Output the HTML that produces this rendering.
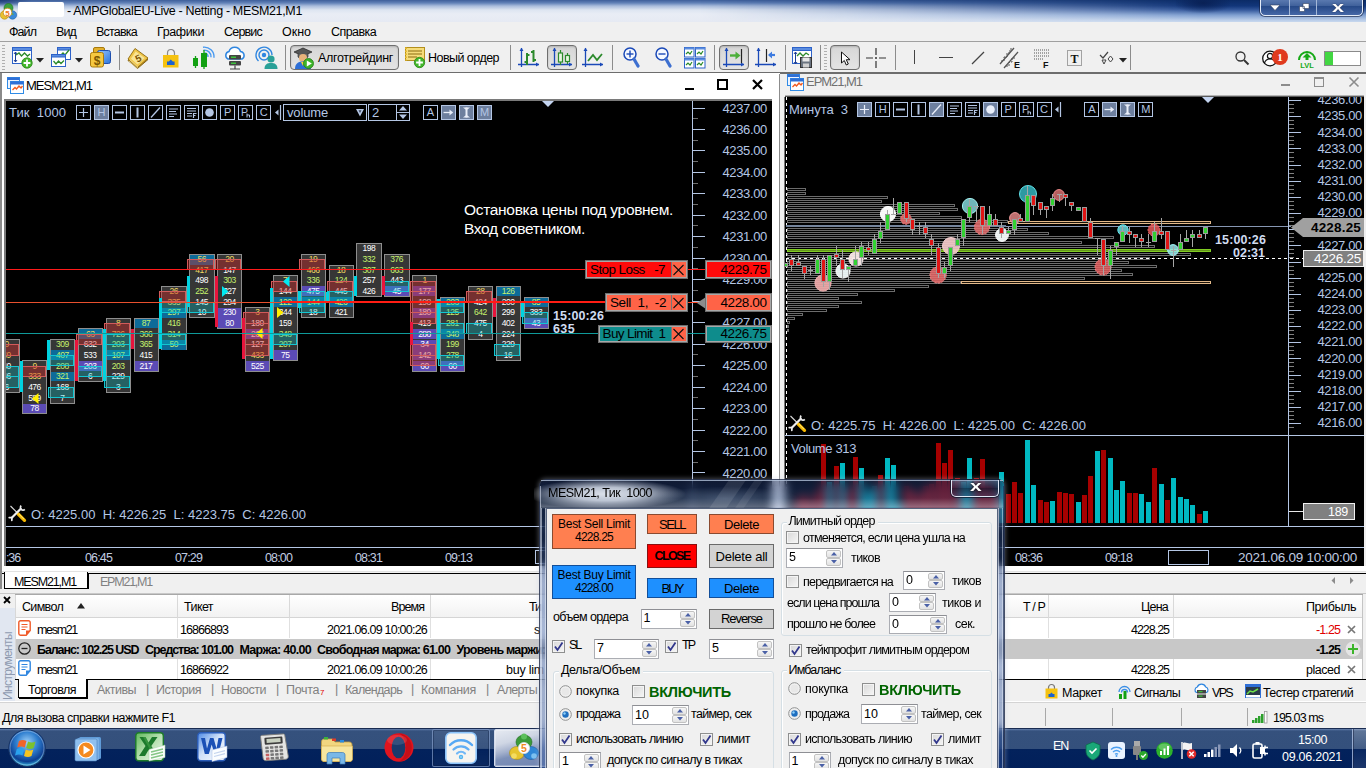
<!DOCTYPE html>
<html lang="ru"><head><meta charset="utf-8"><title>MT5</title><style>
*{box-sizing:border-box;margin:0;padding:0}
html,body{width:1366px;height:768px;overflow:hidden;background:#f0f0f0;font-family:"Liberation Sans",sans-serif;}
#root{position:absolute;left:0;top:0;width:1366px;height:768px;overflow:hidden;background:#f0f0f0}
#root div{position:absolute}
.t{white-space:pre;line-height:1}
svg{position:absolute;overflow:visible}
.dj{font-family:"DejaVu Sans Condensed","DejaVu Sans",sans-serif}

.n{font-size:8.5px;text-align:center;letter-spacing:-.5px;line-height:10.5px;padding-right:.5px}
.ps{font-size:13px;text-align:right;letter-spacing:-.35px;line-height:13px}
</style></head><body><div id="root">
<div style="left:0px;top:0px;width:1366px;height:22px;background:linear-gradient(#3d5e9a 0px,#6282b8 3px,#a9bcdc 6px,#dde5f1 10px,#e9edf5 14px,#e6eaf3 22px);"></div>
<div style="left:700px;top:0px;width:666px;height:22px;background:linear-gradient(#0b2b66 0px,#12367a 6px,#35599c 10px,#7f9fd0 15px,#b9cce8 20px,#c8d8ee 22px);-webkit-mask-image:linear-gradient(90deg,transparent 0,rgba(0,0,0,.35) 30%,rgba(0,0,0,.75) 60%,#000 75%);mask-image:linear-gradient(90deg,transparent 0,rgba(0,0,0,.35) 30%,rgba(0,0,0,.75) 60%,#000 75%)"></div>
<div style="left:1176px;top:0px;width:54px;height:15px;background:radial-gradient(ellipse 55% 70% at 50% 20%,rgba(8,30,80,.85),rgba(8,30,80,0));"></div>
<div style="left:0px;top:0px;width:40px;height:8px;background:radial-gradient(ellipse 80% 90% at 0% 0%,rgba(20,50,110,.8),rgba(20,50,110,0));"></div>
<svg style="left:0px;top:3px" width="18" height="18" viewBox="0 0 18 18"><circle cx="4.500" cy="12" r="4.200" fill="#e8c030" stroke="#b08a10" stroke-width=".6"/><circle cx="12.500" cy="12" r="4.200" fill="#3a8ad8" stroke="#1f5fa8" stroke-width=".6"/><circle cx="8.500" cy="5" r="4.500" fill="#3ca03c" stroke="#1f701f" stroke-width=".6"/><path d="M3 12c2-5 9-5 11 0" fill="#58a858" opacity=".8"/><circle cx="7.500" cy="9.500" r="4.300" fill="#fff" stroke="#d09020" stroke-width=".9"/><text x="7.500" y="12.500" font-size="8" font-weight="bold" text-anchor="middle" fill="#f07818" font-family="Liberation Sans">5</text></svg>
<div style="left:18px;top:2px;width:46px;height:15px;background:#fff;border-radius:2px"></div>
<div class="t" style="left:67px;top:5px;font-size:12.5px;color:#000;letter-spacing:-0.342px;">- AMPGlobalEU-Live - Netting - MESM21,M1</div>
<div style="left:1260px;top:-3px;width:103px;height:19px;border:1px solid #e4ecf8;border-radius:0 0 5px 5px;background:linear-gradient(#6281b6 0%,#41629c 45%,#274a88 50%,#4567a6 100%);box-shadow:0 0 0 1px rgba(20,30,60,.6)"></div>
<div style="left:1289px;top:-2px;width:1px;height:17px;background:#a4b8d8;"></div>
<div style="left:1316px;top:-2px;width:1px;height:17px;background:#a4b8d8;"></div>
<svg style="left:1260px;top:0" width="105" height="16"><path d="M10 5 L20 5 L15 10.5Z" fill="#fff" stroke="#33415f" stroke-width=".6"/><path d="M43 3.5h6v5h-6z M39.5 6.5h5v5h-5z" fill="#fff" stroke="#33415f" stroke-width=".6"/></svg>
<div class="t" style="left:1332px;top:-1px;font-size:15px;color:#fff;font-weight:bold;transform:scaleX(1.45);transform-origin:0 0;text-shadow:0 0 1px #223">x</div>
<div style="left:0px;top:22px;width:1366px;height:20px;background:#f0f0f0;"></div>
<div class="t" style="left:9px;top:26px;font-size:12.5px;color:#000;letter-spacing:-0.933px;">Файл</div>
<div class="t" style="left:56px;top:26px;font-size:12.5px;color:#000;letter-spacing:-0.871px;">Вид</div>
<div class="t" style="left:96px;top:26px;font-size:12.5px;color:#000;letter-spacing:-0.780px;">Вставка</div>
<div class="t" style="left:157px;top:26px;font-size:12.5px;color:#000;letter-spacing:-0.384px;">Графики</div>
<div class="t" style="left:224px;top:26px;font-size:12.5px;color:#000;letter-spacing:-0.800px;">Сервис</div>
<div class="t" style="left:282px;top:26px;font-size:12.5px;color:#000;letter-spacing:-0.011px;">Окно</div>
<div class="t" style="left:331px;top:26px;font-size:12.5px;color:#000;letter-spacing:-0.576px;">Справка</div>
<div style="left:0px;top:41px;width:1366px;height:1px;background:#a0a0a0;"></div>
<div style="left:0px;top:42px;width:1366px;height:30px;background:#f0f0f0;"></div>
<div style="left:0px;top:72px;width:1366px;height:2px;background:#6d6d6d;"></div>
<div style="left:2px;top:45px;width:3px;height:25px;background:repeating-linear-gradient(#a8a8a8 0 1px,transparent 1px 3px);opacity:.9"></div>
<svg style="left:12px;top:47px" width="22" height="22"><rect x=".5" y=".5" width="19" height="16" fill="#fff" stroke="#2d62c9"/><rect x=".5" y=".5" width="19" height="3" fill="#5b8de0" stroke="#2d62c9"/>
<path d="M4 8l3-2 2.5 3 3-3 3 3 2.5-2" fill="none" stroke="#2c8a2c" stroke-width="1.4"/><path d="M3.5 5v10M2 7l1.5-2 1.5 2M2 13l1.5 2 1.5-2" fill="none" stroke="#1d3f96" stroke-width="1"/>
<circle cx="15" cy="16" r="5.2" fill="#43b72b" stroke="#2a8516" stroke-width=".8"/><path d="M15 12.6v6.8M11.6 16h6.8" stroke="#fff" stroke-width="1.8"/></svg>
<svg style="left:36px;top:58px" width="8" height="5"><path d="M0 0h8L4 4.5z" fill="#222"/></svg>
<svg style="left:51px;top:47px" width="22" height="22"><rect x="6.5" y=".5" width="13" height="12" fill="#fff" stroke="#2d62c9"/><rect x="6.5" y=".5" width="13" height="2.5" fill="#5b8de0" stroke="#2d62c9"/><path d="M9 9l3-3 2 2 4-5" fill="none" stroke="#2c8a2c" stroke-width="1.3"/>
<rect x=".5" y="7.5" width="14" height="12" fill="#fff" stroke="#2d62c9"/><rect x=".5" y="7.5" width="14" height="2.5" fill="#5b8de0" stroke="#2d62c9"/><path d="M2.5 14l2.5 3 2.5-3 2.5 2.5 3-3" fill="none" stroke="#2c8a2c" stroke-width="1.3"/></svg>
<svg style="left:75px;top:58px" width="8" height="5"><path d="M0 0h8L4 4.5z" fill="#222"/></svg>
<svg style="left:90px;top:47px" width="22" height="22"><defs><linearGradient id="bl3" x1="0" y1="0" x2="1" y2="1"><stop offset="0" stop-color="#9cc8fa"/><stop offset="1" stop-color="#2a74dc"/></linearGradient></defs>
<rect x="3.500" y=".5" width="11" height="8" rx="1.500" fill="#e2b02e" stroke="#a87a0c"/>
<rect x="7.500" y="3.500" width="13" height="13" rx="2" fill="url(#bl3)" stroke="#1f4fae"/>
<rect x=".5" y="5.500" width="13" height="14.500" rx="2" fill="#f5c840" stroke="#a87a0c"/><text x="7" y="17.500" font-size="12" font-weight="bold" text-anchor="middle" fill="#7a5600" font-family="Liberation Sans">$</text></svg>
<div style="left:119px;top:45px;width:1px;height:25px;background:#8c8c8c;"></div>
<svg style="left:127px;top:47px" width="23" height="22"><path d="M1 13.500L8 3l13 9.500-10.500 9z" fill="#c89a28" stroke="#7a5a0c" stroke-width=".9"/><path d="M1 12L8 1.500l13 9.500-10.500 9.500z" fill="#f0c64a" stroke="#8f6a10" stroke-width=".9"/><path d="M4 11.800L8.700 4.500l9 6.600-7.300 6.500z" fill="#f9e496"/><path d="M2 14l8.500 8M3 12.800l8 7.800" stroke="#fff3c0" stroke-width=".6"/>
<text x="11" y="15" font-size="10" font-weight="bold" text-anchor="middle" fill="#7a5200" font-family="Liberation Sans" transform="rotate(-25 11 11)">5</text></svg>
<svg style="left:162px;top:47px" width="18" height="22"><path d="M5.500 8.500V6a3.500 3.500 0 0 1 7 0v2.500" fill="none" stroke="#8a8a8a" stroke-width="1.200"/><rect x="1" y="8" width="15.500" height="12.500" fill="#f5c211"/><path d="M5 18v-3.500h1.800l2-2 2 2h1.800V18z" fill="#1b62d1"/></svg>
<svg style="left:191px;top:46px" width="24" height="24"><path d="M12.500 4.200a6.500 6.500 0 0 1 7.500 7" fill="none" stroke="#4a9af0" stroke-width="1.400"/><path d="M12 1.200a9.800 9.800 0 0 1 11 10.500" fill="none" stroke="#4a9af0" stroke-width="1.400"/><path d="M13.500 7a3.500 3.500 0 0 1 3.500 4" fill="none" stroke="#4a9af0" stroke-width="1.400"/>
<path d="M4.500 10v12M13 4v19" stroke="#12a012" stroke-width="1.300"/><rect x="2" y="12" width="5" height="8" fill="#12a012"/><rect x="10" y="7" width="6" height="14" fill="#12a012"/></svg>
<svg style="left:223px;top:46px" width="24" height="24"><path d="M5 13a4 4 0 0 1 1-7.500 6 6 0 0 1 11.500 0A4 4 0 0 1 19 13z" fill="#fff" stroke="#2f86e0" stroke-width="1.5"/><rect x="6" y="9" width="12" height="4.500" rx="1" fill="#444"/><rect x="6" y="15" width="12" height="4.500" rx="1" fill="#444"/><rect x="8" y="10.500" width="5" height="1.500" fill="#3dc13d"/><rect x="8" y="16.500" width="5" height="1.500" fill="#3dc13d"/><path d="M12 19.500V23M7 23h10" stroke="#444" stroke-width="1.2"/></svg>
<svg style="left:255px;top:46px" width="24" height="24"><circle cx="9" cy="9" r="2.200" fill="#2f86e0"/><circle cx="9" cy="9" r="5" fill="none" stroke="#2f86e0" stroke-width="1.4"/><path d="M3.500 15A8 8 0 1 1 17 9" fill="none" stroke="#2f86e0" stroke-width="1.4"/>
<circle cx="16" cy="13" r="3.600" fill="#2aa198"/><path d="M9.500 23c0-5 3-6 6.500-6s6.500 1 6.500 6z" fill="#2aa198"/></svg>
<div style="left:285px;top:45px;width:1px;height:25px;background:#8c8c8c;"></div>
<div style="left:290px;top:45px;width:109px;height:25px;background:linear-gradient(#d6d6d6,#e4e4e4);border:1px solid #6f6f6f;border-radius:4px;box-shadow:inset 0 1px 2px rgba(0,0,0,.18)"></div>
<svg style="left:293px;top:47px" width="22" height="22"><path d="M10 1L1 5l9 4 9-4z" fill="#555" stroke="#222" stroke-width=".7"/><path d="M5 7v3c2 2 8 2 10 0V7" fill="#666" stroke="#222" stroke-width=".6"/><circle cx="10" cy="11" r="4" fill="#e8b27a"/><path d="M2 22c0-6 4-7.500 8-7.500s8 1.500 8 7.500z" fill="#2e6fd6"/><path d="M8 15l2 4 2-4" fill="#f2d23a"/>
<circle cx="15.500" cy="16.500" r="5" fill="#3db52a" stroke="#1f7d12" stroke-width=".8"/><path d="M13.800 13.600v5.800l5-2.900z" fill="#fff"/></svg>
<div class="t" style="left:318px;top:52px;font-size:12.5px;color:#000;letter-spacing:-0.328px;">Алготрейдинг</div>
<svg style="left:405px;top:46px" width="24" height="24"><rect x=".5" y="1.500" width="19" height="13" fill="#f6dc7a" stroke="#b38f1d"/><path d="M3 5h14M3 8h14M3 11h9" stroke="#8a6c10" stroke-width="1"/><path d="M1 1.500v13" stroke="#e6b92e" stroke-width="2" stroke-dasharray="1.500 1.500"/>
<circle cx="14.500" cy="16.500" r="5.200" fill="#43b72b" stroke="#2a8516" stroke-width=".8"/><path d="M14.500 13.100v6.800M11.100 16.500h6.800" stroke="#fff" stroke-width="1.800"/></svg>
<div class="t" style="left:428px;top:52px;font-size:12.5px;color:#000;letter-spacing:-0.534px;">Новый ордер</div>
<div style="left:510px;top:45px;width:1px;height:25px;background:#8c8c8c;"></div>
<svg style="left:518px;top:47px" width="22" height="22"><path d="M3.500 1v19M0 17.500h21" stroke="#1a49b8" stroke-width="1.300" fill="none"/><path d="M1.500 4l2-3.200 2 3.200zM18 15.500l3.200 2-3.200 2z" fill="#1a49b8"/><path d="M9 6v12M6.500 15H9M9 8h2.500M15.500 3v12M13 5h2.500M15.500 13H18" stroke="#2c8a2c" stroke-width="2" fill="none"/></svg>
<div style="left:547px;top:45px;width:30px;height:25px;background:linear-gradient(#d6d6d6,#e4e4e4);border:1px solid #6f6f6f;border-radius:4px;box-shadow:inset 0 1px 2px rgba(0,0,0,.18)"></div>
<svg style="left:551px;top:47px" width="22" height="22"><path d="M3.500 1v19M0 17.500h21" stroke="#1a49b8" stroke-width="1.300" fill="none"/><path d="M1.500 4l2-3.200 2 3.200zM18 15.500l3.200 2-3.200 2z" fill="#1a49b8"/><path d="M9.500 3v15M16.500 6v11" stroke="#2c8a2c" stroke-width="1.200"/><rect x="7.500" y="6" width="4" height="9" fill="#e9f7e2" stroke="#2c8a2c" stroke-width="1.200"/><rect x="14.500" y="8.500" width="4" height="6" fill="#e9f7e2" stroke="#2c8a2c" stroke-width="1.200"/></svg>
<svg style="left:582px;top:47px" width="22" height="22"><path d="M3.500 1v19M0 17.500h21" stroke="#1a49b8" stroke-width="1.300" fill="none"/><path d="M1.500 4l2-3.200 2 3.200zM18 15.500l3.200 2-3.200 2z" fill="#1a49b8"/><path d="M6 13l5-6 4 5 5-6" stroke="#2c8a2c" stroke-width="1.800" fill="none" transform="translate(0,1)"/></svg>
<div style="left:612px;top:45px;width:1px;height:25px;background:#8c8c8c;"></div>
<svg style="left:622px;top:46px" width="18" height="24"><circle cx="8" cy="8" r="6" fill="#f4f8ff" stroke="#1a49b8" stroke-width="1.500"/><path d="M4.500 8h7" stroke="#1a49b8" stroke-width="1.400"/><path d="M8 4.500v7" stroke="#1a49b8" stroke-width="1.400"/><path d="M12 13l4 7" stroke="#3d6fd0" stroke-width="3.200" stroke-linecap="round"/></svg>
<svg style="left:654px;top:46px" width="18" height="24"><circle cx="8" cy="8" r="6" fill="#f4f8ff" stroke="#1a49b8" stroke-width="1.500"/><path d="M4.500 8h7" stroke="#1a49b8" stroke-width="1.400"/><path d="M12 13l4 7" stroke="#3d6fd0" stroke-width="3.200" stroke-linecap="round"/></svg>
<svg style="left:684px;top:47px" width="22" height="22"><rect x="0.5" y="0.5" width="9.500" height="9.500" fill="#fff" stroke="#2d62c9"/><rect x="0.5" y="0.5" width="9.500" height="2" fill="#5b8de0"/><path d="M2 7l2-2 2 2 2-3" stroke="#2c8a2c" stroke-width="1.200" fill="none"/><rect x="0.5" y="11.5" width="9.500" height="9.500" fill="#fff" stroke="#2d62c9"/><rect x="0.5" y="11.5" width="9.500" height="2" fill="#5b8de0"/><path d="M2 18l2-2 2 2 2-3" stroke="#2c8a2c" stroke-width="1.200" fill="none"/><rect x="11.5" y="0.5" width="9.500" height="9.500" fill="#fff" stroke="#2d62c9"/><rect x="11.5" y="0.5" width="9.500" height="2" fill="#5b8de0"/><path d="M13 7l2-2 2 2 2-3" stroke="#2c8a2c" stroke-width="1.200" fill="none"/><rect x="11.5" y="11.5" width="9.500" height="9.500" fill="#fff" stroke="#2d62c9"/><rect x="11.5" y="11.5" width="9.500" height="2" fill="#5b8de0"/><path d="M13 18l2-2 2 2 2-3" stroke="#2c8a2c" stroke-width="1.200" fill="none"/></svg>
<div style="left:714px;top:45px;width:1px;height:25px;background:#8c8c8c;"></div>
<div style="left:719px;top:45px;width:30px;height:25px;background:linear-gradient(#d6d6d6,#e4e4e4);border:1px solid #6f6f6f;border-radius:4px;box-shadow:inset 0 1px 2px rgba(0,0,0,.18)"></div>
<svg style="left:723px;top:47px" width="22" height="22"><path d="M3.500 1v19M0 17.500h21" stroke="#1a49b8" stroke-width="1.300" fill="none"/><path d="M1.500 4l2-3.200 2 3.200zM18 15.500l3.200 2-3.200 2z" fill="#1a49b8"/><path d="M18.500 2v14" stroke="#222" stroke-width="1.200"/><path d="M7 8.500h7" stroke="#4caf3a" stroke-width="2.400"/><path d="M12.500 4.500l5 4-5 4z" fill="#4caf3a"/></svg>
<svg style="left:755px;top:47px" width="22" height="22"><path d="M3.500 1v19M0 17.500h21" stroke="#1a49b8" stroke-width="1.300" fill="none"/><path d="M1.500 4l2-3.200 2 3.200zM18 15.500l3.200 2-3.200 2z" fill="#1a49b8"/><path d="M11.500 2v13" stroke="#222" stroke-width="1.200"/><path d="M14 8h6" stroke="#3d7be0" stroke-width="2.200"/><path d="M17 4.500l-4 3.500 4 3.500z" fill="#3d7be0"/></svg>
<div style="left:785px;top:45px;width:1px;height:25px;background:#8c8c8c;"></div>
<svg style="left:792px;top:47px" width="22" height="22"><rect x=".5" y=".5" width="19" height="16" fill="#fff" stroke="#2d62c9"/><rect x=".5" y=".5" width="19" height="3" fill="#5b8de0" stroke="#2d62c9"/><path d="M5 9l3-3 3 3 3-3 3 2" fill="none" stroke="#2c8a2c" stroke-width="1.300"/><path d="M3.500 5v12M2 7l1.500-2 1.500 2M2 15l1.500 2 1.500-2" fill="none" stroke="#1d3f96" stroke-width="1"/>
<rect x="8.500" y="10.500" width="11" height="10" fill="#6b7480" stroke="#333"/><rect x="10.500" y="10.500" width="7" height="4" fill="#e8e8e8"/><rect x="11" y="16.500" width="6" height="4" fill="#d0d0d0"/></svg>
<div style="left:820px;top:45px;width:1px;height:25px;background:#8c8c8c;"></div>
<div style="left:824px;top:45px;width:3px;height:25px;background:repeating-linear-gradient(#a8a8a8 0 1px,transparent 1px 3px);opacity:.9"></div>
<div style="left:830px;top:45px;width:30px;height:25px;background:linear-gradient(#d6d6d6,#e4e4e4);border:1px solid #6f6f6f;border-radius:4px;box-shadow:inset 0 1px 2px rgba(0,0,0,.18)"></div>
<svg style="left:840px;top:51px" width="12" height="16"><path d="M1.500 1v11l2.800-2.500 2 4.500 2-1-2-4.300h3.700z" fill="#fff" stroke="#111" stroke-width="1"/></svg>
<svg style="left:866px;top:48px" width="20" height="20"><path d="M10 0v7M10 13v7M0 10h7M13 10h7" stroke="#333" stroke-width="1.200"/><path d="M9 10h2M10 9v2" stroke="#333" stroke-width="1"/></svg>
<div style="left:895px;top:45px;width:1px;height:25px;background:#8c8c8c;"></div>
<div style="left:914px;top:50px;width:1px;height:14px;background:#444;"></div>
<div style="left:939px;top:57px;width:14px;height:1px;background:#444;"></div>
<svg style="left:971px;top:51px" width="14" height="14"><path d="M1 13L13 1" stroke="#444" stroke-width="1.300"/></svg>
<svg style="left:999px;top:47px" width="24" height="22"><path d="M1 17L15 1M5 21L19 5" stroke="#555" stroke-width="1.300"/><path d="M2 14h3v-4h3V6h3V2h3M7 19h3v-4h3v-4h3" stroke="#555" stroke-width="1" fill="none" stroke-dasharray="2 1"/><text x="15" y="21" font-size="9" font-weight="bold" fill="#111" font-family="Liberation Sans">E</text></svg>
<svg style="left:1034px;top:49px" width="18" height="20"><path d="M0 1h15M0 4h15M0 7h15M0 10h9" stroke="#555" stroke-width="1" stroke-dasharray="1 1"/><text x="9" y="19" font-size="9" font-weight="bold" fill="#111" font-family="Liberation Sans">F</text></svg>
<svg style="left:1067px;top:50px" width="15" height="16"><rect x=".5" y=".5" width="14" height="15" fill="none" stroke="#555" stroke-dasharray="1 1"/><text x="7.500" y="12.500" font-size="12" text-anchor="middle" fill="#111" font-family="Liberation Serif" font-weight="bold">T</text></svg>
<svg style="left:1099px;top:50px" width="14" height="16"><path d="M1 5l3 3 5-6" stroke="#444" stroke-width="1.200" fill="none"/><path d="M9 9l2.500-3 2.500 3-2.500 3z" fill="none" stroke="#444" stroke-width="1"/><path d="M3 10l2 4 2-4z" fill="none" stroke="#444" stroke-width="1"/></svg>
<svg style="left:1119px;top:58px" width="8" height="5"><path d="M0 0h8L4 4.5z" fill="#222"/></svg>
<div style="left:1130px;top:45px;width:1px;height:25px;background:#8c8c8c;"></div>
<svg style="left:1235px;top:51px" width="15" height="15"><circle cx="5.500" cy="5.500" r="4.500" fill="none" stroke="#333" stroke-width="1.300"/><path d="M9 9l4.500 4.500" stroke="#333" stroke-width="2"/></svg>
<svg style="left:1262px;top:49px" width="28" height="18"><circle cx="8" cy="9.500" r="7.300" fill="#fff" stroke="#111" stroke-width="1.300"/><circle cx="8" cy="7" r="2.600" fill="none" stroke="#111" stroke-width="1.200"/><path d="M2.500 14c1-3.500 3-4 5.500-4s4.500.5 5.500 4" fill="none" stroke="#111" stroke-width="1.200"/><circle cx="18" cy="8" r="8" fill="#e03a1e"/><text x="18" y="12" font-size="11" font-weight="bold" text-anchor="middle" fill="#fff" font-family="Liberation Serif">1</text></svg>
<svg style="left:1297px;top:49px" width="20" height="20"><path d="M2 11a8 8 0 0 1 16 0" fill="none" stroke="#16a916" stroke-width="2"/><path d="M10 4l-4.500 4.500h3V11h3V8.500h3z" fill="#16a916"/><text x="10" y="19" font-size="7.500" font-weight="bold" text-anchor="middle" fill="#16a916" font-family="Liberation Sans">LVL</text></svg>
<div style="left:1324px;top:51px;width:37px;height:15px;background:#fff;border:1px solid #8a8a8a"></div>
<div style="left:1325px;top:52px;width:8px;height:13px;background:#42d642;"></div>
<div style="left:0px;top:74px;width:1366px;height:498px;background:#f0f0f0;"></div>
<div style="left:0px;top:73px;width:780px;height:499px;background:#ffffff;border-left:2px solid #8a8a8a;"></div>
<div style="left:779px;top:74px;width:1px;height:497px;background:#8c8c8c;"></div>
<svg style="left:7px;top:77px" width="17" height="17"><rect x=".5" y=".5" width="12" height="11" fill="#eef4ff" stroke="#2f8be6"/><rect x=".5" y=".5" width="12" height="2.500" fill="#2f6fd6"/><rect x="3.500" y="4.500" width="13" height="12" fill="#fff" stroke="#2f8be6"/><rect x="3.500" y="4.500" width="13" height="3" fill="#2f6fd6"/><path d="M5.500 13l2.500-2.500 1.500 1.500 2.500-3 2 2 1.500-2" stroke="#f0581e" stroke-width="1.300" fill="none"/></svg>
<div class="t" style="left:26px;top:79px;font-size:13px;color:#000;letter-spacing:-1.014px;">MESM21,M1</div>
<div style="left:685px;top:88px;width:9px;height:2px;background:#000;"></div>
<div style="left:717px;top:79px;width:11px;height:11px;border:2px solid #000;border-top-width:2px"></div>
<svg style="left:752px;top:79px" width="11" height="11"><path d="M1 1l9 9M10 1l-9 9" stroke="#000" stroke-width="2.200"/></svg>
<div style="left:4px;top:99px;width:768px;height:468px;background:#000;border-left:2px solid #7a7a7a;border-top:2px solid #7a7a7a"></div>
<div style="left:780px;top:74px;width:586px;height:498px;background:#f0f0f0;"></div>
<svg style="left:787px;top:70px" width="17" height="21"><rect x=".5" y="4.500" width="12" height="11" fill="#eef4ff" stroke="#2f8be6"/><rect x=".5" y="4.500" width="12" height="2.500" fill="#2f6fd6"/><rect x="3.500" y="8.500" width="13" height="12" fill="#fff" stroke="#2f8be6"/><rect x="3.500" y="8.500" width="13" height="3" fill="#2f6fd6"/><path d="M5.500 17l2.500-2.500 1.500 1.500 2.500-3 2 2 1.500-2" stroke="#f0581e" stroke-width="1.300" fill="none"/></svg>
<div class="t" style="left:806px;top:75px;font-size:13px;color:#707070;letter-spacing:-1.037px;">EPM21,M1</div>
<div style="left:1281px;top:84px;width:9px;height:2px;background:#8c8c8c;"></div>
<div style="left:1314px;top:77px;width:10px;height:10px;border:1px solid #8c8c8c;border-top-width:2px"></div>
<svg style="left:1349px;top:77px" width="10" height="10"><path d="M.5 .5l9 9M9.500 .5l-9 9" stroke="#8c8c8c" stroke-width="1.600"/></svg>
<div style="left:785px;top:95px;width:579px;height:1px;background:#b4b4b4;"></div>
<div style="left:785px;top:96px;width:579px;height:1px;background:#5a5a5a;"></div>
<div style="left:785px;top:97px;width:579px;height:470px;background:#000;"></div>
<div style="left:784px;top:97px;width:1px;height:470px;background:#7a7a7a;"></div>
<div style="left:786px;top:97px;width:1.400px;height:470px;background:repeating-linear-gradient(#fff 0 3px,#000 3px 6px)"></div>
<div style="left:0px;top:566px;width:1366px;height:6px;background:#ffffff;"></div>
<div style="left:0px;top:571px;width:1366px;height:1px;background:#e2e2e2;"></div>
<div style="left:0px;top:572px;width:1366px;height:17px;background:#f0f0f0;"></div>
<div style="left:0px;top:572.6px;width:1366px;height:1.2px;background:#000;"></div>
<div style="left:4px;top:572px;width:84px;height:17px;background:#fff;border:1px solid #000;border-top:none;box-shadow:1px 1px 0 #000"></div>
<div style="left:0px;top:566px;width:2px;height:24px;background:#8a8a8a;"></div>
<div class="t" style="left:14px;top:576px;font-size:12.5px;color:#000;letter-spacing:-1.138px;">MESM21,M1</div>
<div class="t" style="left:100px;top:576px;font-size:12.5px;color:#808080;letter-spacing:-1.228px;">EPM21,M1</div>
<svg style="left:1330px;top:576px" width="30" height="10"><path d="M5 1v7L1.500 4.500zM20 1v7l3.500-3.500z" fill="#8c8c8c"/></svg>
<div style="left:0px;top:589px;width:1366px;height:5px;background:#f0f0f0;"></div>
<div style="left:0px;top:593px;width:1366px;height:1px;background:#c8c8c8;"></div>
<div style="left:6px;top:101px;width:766px;height:466px;overflow:hidden">
<div style="left:-11.76px;top:238.1px;width:25.3px;height:53.85px;background:#363636;border:1px solid #8e8e8e"></div>
<div class="t n" style="left:-11.8px;top:238.3px;width:25.3px;color:#f0d860">0</div>
<div class="t n" style="left:-11.8px;top:248.9px;width:25.3px;color:#f0d860">69</div>
<div class="t n" style="left:-11.8px;top:259.6px;width:25.3px;color:#ffffff">60</div>
<div class="t n" style="left:-11.8px;top:270.2px;width:25.3px;color:#ffffff">46</div>
<div class="t n" style="left:-11.8px;top:280.9px;width:25.3px;color:#ffffff">6</div>
<div style="left:-13.76px;top:243.43px;width:26.3px;height:11.15px;background:rgba(205,40,40,.42);border:1px solid #d25a5a"></div>
<div style="left:-13.76px;top:264.72px;width:26.3px;height:11.15px;background:rgba(0,200,205,.30);border:1px solid #12c6d2"></div>
<div style="left:-13.76px;top:275.38px;width:26.3px;height:11.15px;background:rgba(0,200,205,.30);border:1px solid #12c6d2"></div>
<div style="left:16.1px;top:259.4px;width:25.3px;height:53.85px;background:#363636;border:1px solid #8e8e8e"></div>
<div style="left:17.1px;top:302.6px;width:23.3px;height:9.85px;background:#5b4bb5;"></div>
<div class="t n" style="left:16.1px;top:259.6px;width:25.3px;color:#f0d860">9</div>
<div class="t n" style="left:16.1px;top:270.2px;width:25.3px;color:#f0d860">333</div>
<div class="t n" style="left:16.1px;top:280.9px;width:25.3px;color:#ffffff">476</div>
<div class="t n" style="left:16.1px;top:291.6px;width:25.3px;color:#ffffff">589</div>
<div class="t n" style="left:16.1px;top:302.2px;width:25.3px;color:#ffffff">78</div>
<div style="left:14.1px;top:264.72px;width:26.3px;height:11.15px;background:rgba(205,40,40,.42);border:1px solid #d25a5a"></div>
<div style="left:13.5px;top:259.8px;width:3px;height:30.8px;background:#00d2e0;"></div>
<div style="left:43.96px;top:238.1px;width:25.3px;height:64.5px;background:#363636;border:1px solid #8e8e8e"></div>
<div style="left:44.96px;top:249.35px;width:23.3px;height:9.85px;background:#0d6b99;"></div>
<div style="left:44.96px;top:270.65px;width:23.3px;height:9.85px;background:#0d6b99;"></div>
<div class="t n" style="left:44.0px;top:238.3px;width:25.3px;color:#c6f26e">309</div>
<div class="t n" style="left:44.0px;top:248.9px;width:25.3px;color:#c6f26e">407</div>
<div class="t n" style="left:44.0px;top:259.6px;width:25.3px;color:#c6f26e">208</div>
<div class="t n" style="left:44.0px;top:270.2px;width:25.3px;color:#c6f26e">321</div>
<div class="t n" style="left:44.0px;top:280.9px;width:25.3px;color:#ffffff">168</div>
<div class="t n" style="left:44.0px;top:291.6px;width:25.3px;color:#ffffff">7</div>
<div style="left:41.96px;top:254.07px;width:26.3px;height:11.15px;background:rgba(0,200,205,.30);border:1px solid #12c6d2"></div>
<div style="left:41.96px;top:286.03px;width:26.3px;height:11.15px;background:rgba(0,200,205,.30);border:1px solid #12c6d2"></div>
<div style="left:41.36px;top:239px;width:3px;height:29.9px;background:#00d2e0;"></div>
<div style="left:71.82px;top:227.45px;width:25.3px;height:53.85px;background:#363636;border:1px solid #8e8e8e"></div>
<div style="left:72.82px;top:228.45px;width:23.3px;height:9.65px;background:#0d6b99;"></div>
<div style="left:72.82px;top:260.0px;width:23.3px;height:9.85px;background:#5b4bb5;"></div>
<div class="t n" style="left:71.8px;top:227.6px;width:25.3px;color:#f0d860">63</div>
<div class="t n" style="left:71.8px;top:238.3px;width:25.3px;color:#ffffff">632</div>
<div class="t n" style="left:71.8px;top:248.9px;width:25.3px;color:#ffffff">533</div>
<div class="t n" style="left:71.8px;top:259.6px;width:25.3px;color:#ffffff">203</div>
<div class="t n" style="left:71.8px;top:270.2px;width:25.3px;color:#ffffff">6</div>
<div style="left:69.82px;top:232.77px;width:26.3px;height:11.15px;background:rgba(205,40,40,.42);border:1px solid #d25a5a"></div>
<div style="left:69.82px;top:264.72px;width:26.3px;height:11.15px;background:rgba(0,200,205,.30);border:1px solid #12c6d2"></div>
<div style="left:69.22px;top:239px;width:3px;height:40.9px;background:#e8143c;"></div>
<div style="left:99.68px;top:216.8px;width:25.3px;height:75.15px;background:#363636;border:1px solid #8e8e8e"></div>
<div style="left:100.68px;top:249.35px;width:23.3px;height:9.85px;background:#0d6b99;"></div>
<div class="t n" style="left:99.7px;top:217.0px;width:25.3px;color:#f0d860">8</div>
<div class="t n" style="left:99.7px;top:227.6px;width:25.3px;color:#f0d860">726</div>
<div class="t n" style="left:99.7px;top:238.3px;width:25.3px;color:#c6f26e">203</div>
<div class="t n" style="left:99.7px;top:248.9px;width:25.3px;color:#c6f26e">107</div>
<div class="t n" style="left:99.7px;top:259.6px;width:25.3px;color:#c6f26e">203</div>
<div class="t n" style="left:99.7px;top:270.2px;width:25.3px;color:#ffffff">229</div>
<div class="t n" style="left:99.7px;top:280.9px;width:25.3px;color:#ffffff">3</div>
<div style="left:97.68px;top:222.12px;width:26.3px;height:11.15px;background:rgba(205,40,40,.42);border:1px solid #d25a5a"></div>
<div style="left:97.68px;top:232.77px;width:26.3px;height:11.15px;background:rgba(0,200,205,.30);border:1px solid #12c6d2"></div>
<div style="left:97.68px;top:243.43px;width:26.3px;height:11.15px;background:rgba(0,200,205,.30);border:1px solid #12c6d2"></div>
<div style="left:97.68px;top:275.38px;width:26.3px;height:11.15px;background:rgba(0,200,205,.30);border:1px solid #12c6d2"></div>
<div style="left:97.08px;top:228.3px;width:3px;height:51.6px;background:#00d2e0;"></div>
<div style="left:127.54px;top:216.8px;width:25.3px;height:53.85px;background:#363636;border:1px solid #8e8e8e"></div>
<div style="left:128.54px;top:217.8px;width:23.3px;height:9.65px;background:#0d6b99;"></div>
<div style="left:128.54px;top:260.0px;width:23.3px;height:9.85px;background:#5b4bb5;"></div>
<div class="t n" style="left:127.5px;top:217.0px;width:25.3px;color:#c6f26e">87</div>
<div class="t n" style="left:127.5px;top:227.6px;width:25.3px;color:#c6f26e">366</div>
<div class="t n" style="left:127.5px;top:238.3px;width:25.3px;color:#c6f26e">365</div>
<div class="t n" style="left:127.5px;top:248.9px;width:25.3px;color:#ffffff">415</div>
<div class="t n" style="left:127.5px;top:259.6px;width:25.3px;color:#ffffff">217</div>
<div style="left:124.94px;top:228.3px;width:3px;height:19.4px;background:#e8143c;"></div>
<div style="left:155.4px;top:184.85px;width:25.3px;height:64.5px;background:#363636;border:1px solid #8e8e8e"></div>
<div style="left:156.4px;top:206.75px;width:23.3px;height:9.85px;background:#0d6b99;"></div>
<div style="left:156.4px;top:238.7px;width:23.3px;height:9.85px;background:#0d6b99;"></div>
<div class="t n" style="left:155.4px;top:185.1px;width:25.3px;color:#f0d860">26</div>
<div class="t n" style="left:155.4px;top:195.7px;width:25.3px;color:#f0d860">335</div>
<div class="t n" style="left:155.4px;top:206.3px;width:25.3px;color:#c6f26e">297</div>
<div class="t n" style="left:155.4px;top:217.0px;width:25.3px;color:#c6f26e">416</div>
<div class="t n" style="left:155.4px;top:227.6px;width:25.3px;color:#c6f26e">314</div>
<div class="t n" style="left:155.4px;top:238.3px;width:25.3px;color:#c6f26e">50</div>
<div style="left:153.4px;top:190.18px;width:26.3px;height:11.15px;background:rgba(205,40,40,.42);border:1px solid #d25a5a"></div>
<div style="left:153.4px;top:200.82px;width:26.3px;height:11.15px;background:rgba(0,200,205,.30);border:1px solid #12c6d2"></div>
<div style="left:153.4px;top:232.77px;width:26.3px;height:11.15px;background:rgba(0,200,205,.30);border:1px solid #12c6d2"></div>
<div style="left:152.8px;top:196.7px;width:3px;height:51.3px;background:#00d2e0;"></div>
<div style="left:183.26px;top:152.9px;width:25.3px;height:64.5px;background:#363636;border:1px solid #8e8e8e"></div>
<div style="left:184.26px;top:153.9px;width:23.3px;height:9.65px;background:#0d6b99;"></div>
<div class="t n" style="left:183.3px;top:153.1px;width:25.3px;color:#f0d860">56</div>
<div class="t n" style="left:183.3px;top:163.8px;width:25.3px;color:#f0d860">417</div>
<div class="t n" style="left:183.3px;top:174.4px;width:25.3px;color:#ffffff">498</div>
<div class="t n" style="left:183.3px;top:185.1px;width:25.3px;color:#c6f26e">252</div>
<div class="t n" style="left:183.3px;top:195.7px;width:25.3px;color:#ffffff">145</div>
<div class="t n" style="left:183.3px;top:206.3px;width:25.3px;color:#ffffff">10</div>
<div style="left:181.26px;top:158.23px;width:26.3px;height:11.15px;background:rgba(205,40,40,.42);border:1px solid #d25a5a"></div>
<div style="left:181.26px;top:200.82px;width:26.3px;height:11.15px;background:rgba(0,200,205,.30);border:1px solid #12c6d2"></div>
<div style="left:180.66px;top:175px;width:3px;height:30.8px;background:#00d2e0;"></div>
<div style="left:211.12px;top:152.9px;width:25.3px;height:75.15px;background:#363636;border:1px solid #8e8e8e"></div>
<div style="left:212.12px;top:206.75px;width:23.3px;height:9.85px;background:#5b4bb5;"></div>
<div style="left:212.12px;top:217.4px;width:23.3px;height:9.85px;background:#5b4bb5;"></div>
<div class="t n" style="left:211.1px;top:153.1px;width:25.3px;color:#f0d860">20</div>
<div class="t n" style="left:211.1px;top:163.8px;width:25.3px;color:#ffffff">147</div>
<div class="t n" style="left:211.1px;top:174.4px;width:25.3px;color:#c6f26e">303</div>
<div class="t n" style="left:211.1px;top:185.1px;width:25.3px;color:#ffffff">327</div>
<div class="t n" style="left:211.1px;top:195.7px;width:25.3px;color:#ffffff">294</div>
<div class="t n" style="left:211.1px;top:206.3px;width:25.3px;color:#ffffff">230</div>
<div class="t n" style="left:211.1px;top:217.0px;width:25.3px;color:#ffffff">80</div>
<div style="left:209.12px;top:158.23px;width:26.3px;height:11.15px;background:rgba(205,40,40,.42);border:1px solid #d25a5a"></div>
<div style="left:208.52px;top:175px;width:3px;height:50.8px;background:#e8143c;"></div>
<div style="left:238.98px;top:206.15px;width:25.3px;height:64.5px;background:#363636;border:1px solid #8e8e8e"></div>
<div style="left:239.98px;top:228.05px;width:23.3px;height:9.85px;background:#5b4bb5;"></div>
<div style="left:239.98px;top:260.0px;width:23.3px;height:9.85px;background:#5b4bb5;"></div>
<div class="t n" style="left:239.0px;top:206.3px;width:25.3px;color:#f0d860">3</div>
<div class="t n" style="left:239.0px;top:217.0px;width:25.3px;color:#ffffff">180</div>
<div class="t n" style="left:239.0px;top:227.6px;width:25.3px;color:#ffffff">264</div>
<div class="t n" style="left:239.0px;top:238.3px;width:25.3px;color:#ffffff">127</div>
<div class="t n" style="left:239.0px;top:248.9px;width:25.3px;color:#f0d860">433</div>
<div class="t n" style="left:239.0px;top:259.6px;width:25.3px;color:#ffffff">525</div>
<div style="left:236.98px;top:211.47px;width:26.3px;height:11.15px;background:rgba(205,40,40,.42);border:1px solid #d25a5a"></div>
<div style="left:236.98px;top:222.12px;width:26.3px;height:11.15px;background:rgba(205,40,40,.42);border:1px solid #d25a5a"></div>
<div style="left:236.98px;top:232.77px;width:26.3px;height:11.15px;background:rgba(205,40,40,.42);border:1px solid #d25a5a"></div>
<div style="left:236.98px;top:243.43px;width:26.3px;height:11.15px;background:rgba(205,40,40,.42);border:1px solid #d25a5a"></div>
<div style="left:236.38px;top:217px;width:3px;height:41px;background:#e8143c;"></div>
<div style="left:266.84px;top:174.2px;width:25.3px;height:85.8px;background:#363636;border:1px solid #8e8e8e"></div>
<div style="left:267.84px;top:196.1px;width:23.3px;height:9.85px;background:#0d6b99;"></div>
<div style="left:267.84px;top:249.35px;width:23.3px;height:9.85px;background:#5b4bb5;"></div>
<div class="t n" style="left:266.8px;top:174.4px;width:25.3px;color:#f0d860">7</div>
<div class="t n" style="left:266.8px;top:185.1px;width:25.3px;color:#ffffff">144</div>
<div class="t n" style="left:266.8px;top:195.7px;width:25.3px;color:#c6f26e">122</div>
<div class="t n" style="left:266.8px;top:206.3px;width:25.3px;color:#ffffff">344</div>
<div class="t n" style="left:266.8px;top:217.0px;width:25.3px;color:#ffffff">159</div>
<div class="t n" style="left:266.8px;top:227.6px;width:25.3px;color:#c6f26e">348</div>
<div class="t n" style="left:266.8px;top:238.3px;width:25.3px;color:#c6f26e">207</div>
<div class="t n" style="left:266.8px;top:248.9px;width:25.3px;color:#ffffff">75</div>
<div style="left:264.84px;top:179.52px;width:26.3px;height:11.15px;background:rgba(205,40,40,.42);border:1px solid #d25a5a"></div>
<div style="left:264.84px;top:232.77px;width:26.3px;height:11.15px;background:rgba(0,200,205,.30);border:1px solid #12c6d2"></div>
<div style="left:264.24px;top:186.5px;width:3px;height:71.9px;background:#00d2e0;"></div>
<div style="left:294.7px;top:152.9px;width:25.3px;height:64.5px;background:#363636;border:1px solid #8e8e8e"></div>
<div style="left:295.7px;top:185.45px;width:23.3px;height:9.85px;background:#5b4bb5;"></div>
<div style="left:295.7px;top:196.1px;width:23.3px;height:9.85px;background:#0d6b99;"></div>
<div class="t n" style="left:294.7px;top:153.1px;width:25.3px;color:#f0d860">19</div>
<div class="t n" style="left:294.7px;top:163.8px;width:25.3px;color:#f0d860">466</div>
<div class="t n" style="left:294.7px;top:174.4px;width:25.3px;color:#c6f26e">336</div>
<div class="t n" style="left:294.7px;top:185.1px;width:25.3px;color:#ffffff">475</div>
<div class="t n" style="left:294.7px;top:195.7px;width:25.3px;color:#c6f26e">144</div>
<div class="t n" style="left:294.7px;top:206.3px;width:25.3px;color:#ffffff">18</div>
<div style="left:292.7px;top:158.23px;width:26.3px;height:11.15px;background:rgba(205,40,40,.42);border:1px solid #d25a5a"></div>
<div style="left:292.7px;top:190.18px;width:26.3px;height:11.15px;background:rgba(0,200,205,.30);border:1px solid #12c6d2"></div>
<div style="left:292.7px;top:200.82px;width:26.3px;height:11.15px;background:rgba(0,200,205,.30);border:1px solid #12c6d2"></div>
<div style="left:292.1px;top:190px;width:3px;height:17px;background:#00d2e0;"></div>
<div style="left:322.56px;top:163.55px;width:25.3px;height:53.85px;background:#363636;border:1px solid #8e8e8e"></div>
<div style="left:323.56px;top:196.1px;width:23.3px;height:9.85px;background:#0d6b99;"></div>
<div class="t n" style="left:322.6px;top:163.8px;width:25.3px;color:#f0d860">18</div>
<div class="t n" style="left:322.6px;top:174.4px;width:25.3px;color:#c6f26e">124</div>
<div class="t n" style="left:322.6px;top:185.1px;width:25.3px;color:#ffffff">445</div>
<div class="t n" style="left:322.6px;top:195.7px;width:25.3px;color:#c6f26e">426</div>
<div class="t n" style="left:322.6px;top:206.3px;width:25.3px;color:#ffffff">421</div>
<div style="left:320.56px;top:179.52px;width:26.3px;height:11.15px;background:rgba(205,40,40,.42);border:1px solid #d25a5a"></div>
<div style="left:320.56px;top:190.18px;width:26.3px;height:11.15px;background:rgba(0,200,205,.30);border:1px solid #12c6d2"></div>
<div style="left:319.96px;top:190.7px;width:3px;height:9.9px;background:#00d2e0;"></div>
<div style="left:350.42px;top:142.25px;width:25.3px;height:53.85px;background:#363636;border:1px solid #8e8e8e"></div>
<div class="t n" style="left:350.4px;top:142.4px;width:25.3px;color:#ffffff">198</div>
<div class="t n" style="left:350.4px;top:153.1px;width:25.3px;color:#c6f26e">332</div>
<div class="t n" style="left:350.4px;top:163.8px;width:25.3px;color:#c6f26e">307</div>
<div class="t n" style="left:350.4px;top:174.4px;width:25.3px;color:#ffffff">257</div>
<div class="t n" style="left:350.4px;top:185.1px;width:25.3px;color:#ffffff">426</div>
<div style="left:347.82px;top:175.4px;width:3px;height:19.5px;background:#00d2e0;"></div>
<div style="left:378.28px;top:152.9px;width:25.3px;height:43.2px;background:#363636;border:1px solid #8e8e8e"></div>
<div style="left:379.28px;top:185.45px;width:23.3px;height:9.85px;background:#5b4bb5;"></div>
<div class="t n" style="left:378.3px;top:153.1px;width:25.3px;color:#c6f26e">376</div>
<div class="t n" style="left:378.3px;top:163.8px;width:25.3px;color:#c6f26e">663</div>
<div class="t n" style="left:378.3px;top:174.4px;width:25.3px;color:#ffffff">443</div>
<div class="t n" style="left:378.3px;top:185.1px;width:25.3px;color:#ffffff">45</div>
<div style="left:376.28px;top:179.52px;width:26.3px;height:11.15px;background:rgba(0,200,205,.30);border:1px solid #12c6d2"></div>
<div style="left:375.68px;top:175.4px;width:3px;height:18.6px;background:#e8143c;"></div>
<div style="left:406.14px;top:174.2px;width:25.3px;height:96.45px;background:#363636;border:1px solid #8e8e8e"></div>
<div style="left:407.14px;top:185.45px;width:23.3px;height:9.85px;background:#5b4bb5;"></div>
<div style="left:407.14px;top:206.75px;width:23.3px;height:9.85px;background:#5b4bb5;"></div>
<div style="left:407.14px;top:228.05px;width:23.3px;height:9.85px;background:#5b4bb5;"></div>
<div style="left:407.14px;top:238.7px;width:23.3px;height:9.85px;background:#5b4bb5;"></div>
<div style="left:407.14px;top:249.35px;width:23.3px;height:9.85px;background:#5b4bb5;"></div>
<div style="left:407.14px;top:260.0px;width:23.3px;height:9.85px;background:#5b4bb5;"></div>
<div class="t n" style="left:406.1px;top:174.4px;width:25.3px;color:#f0d860">1</div>
<div class="t n" style="left:406.1px;top:185.1px;width:25.3px;color:#ffffff">177</div>
<div class="t n" style="left:406.1px;top:195.7px;width:25.3px;color:#ffffff">198</div>
<div class="t n" style="left:406.1px;top:206.3px;width:25.3px;color:#ffffff">180</div>
<div class="t n" style="left:406.1px;top:217.0px;width:25.3px;color:#ffffff">413</div>
<div class="t n" style="left:406.1px;top:227.6px;width:25.3px;color:#ffffff">288</div>
<div class="t n" style="left:406.1px;top:238.3px;width:25.3px;color:#ffffff">34</div>
<div class="t n" style="left:406.1px;top:248.9px;width:25.3px;color:#ffffff">142</div>
<div class="t n" style="left:406.1px;top:259.6px;width:25.3px;color:#ffffff">60</div>
<div style="left:404.14px;top:179.52px;width:26.3px;height:11.15px;background:rgba(205,40,40,.42);border:1px solid #d25a5a"></div>
<div style="left:404.14px;top:190.18px;width:26.3px;height:11.15px;background:rgba(205,40,40,.42);border:1px solid #d25a5a"></div>
<div style="left:404.14px;top:200.82px;width:26.3px;height:11.15px;background:rgba(205,40,40,.42);border:1px solid #d25a5a"></div>
<div style="left:404.14px;top:211.47px;width:26.3px;height:11.15px;background:rgba(205,40,40,.42);border:1px solid #d25a5a"></div>
<div style="left:404.14px;top:243.43px;width:26.3px;height:11.15px;background:rgba(205,40,40,.42);border:1px solid #d25a5a"></div>
<div style="left:404.14px;top:254.07px;width:26.3px;height:11.15px;background:rgba(205,40,40,.42);border:1px solid #d25a5a"></div>
<div style="left:403.54px;top:221.4px;width:3px;height:22.2px;background:#e8143c;"></div>
<div style="left:434.0px;top:195.5px;width:25.3px;height:75.15px;background:#363636;border:1px solid #8e8e8e"></div>
<div style="left:435.0px;top:196.5px;width:23.3px;height:9.65px;background:#0d6b99;"></div>
<div style="left:435.0px;top:228.05px;width:23.3px;height:9.85px;background:#0d6b99;"></div>
<div style="left:435.0px;top:260.0px;width:23.3px;height:9.85px;background:#5b4bb5;"></div>
<div class="t n" style="left:434.0px;top:195.7px;width:25.3px;color:#c6f26e">203</div>
<div class="t n" style="left:434.0px;top:206.3px;width:25.3px;color:#c6f26e">125</div>
<div class="t n" style="left:434.0px;top:217.0px;width:25.3px;color:#c6f26e">281</div>
<div class="t n" style="left:434.0px;top:227.6px;width:25.3px;color:#c6f26e">348</div>
<div class="t n" style="left:434.0px;top:238.3px;width:25.3px;color:#c6f26e">199</div>
<div class="t n" style="left:434.0px;top:248.9px;width:25.3px;color:#c6f26e">278</div>
<div class="t n" style="left:434.0px;top:259.6px;width:25.3px;color:#ffffff">60</div>
<div style="left:432.0px;top:200.82px;width:26.3px;height:11.15px;background:rgba(0,200,205,.30);border:1px solid #12c6d2"></div>
<div style="left:432.0px;top:222.12px;width:26.3px;height:11.15px;background:rgba(0,200,205,.30);border:1px solid #12c6d2"></div>
<div style="left:432.0px;top:254.07px;width:26.3px;height:11.15px;background:rgba(0,200,205,.30);border:1px solid #12c6d2"></div>
<div style="left:431.4px;top:198px;width:3px;height:60.4px;background:#00d2e0;"></div>
<div style="left:461.86px;top:184.85px;width:25.3px;height:53.85px;background:#363636;border:1px solid #8e8e8e"></div>
<div class="t n" style="left:461.9px;top:185.1px;width:25.3px;color:#f0d860">28</div>
<div class="t n" style="left:461.9px;top:195.7px;width:25.3px;color:#ffffff">424</div>
<div class="t n" style="left:461.9px;top:206.3px;width:25.3px;color:#c6f26e">642</div>
<div class="t n" style="left:461.9px;top:217.0px;width:25.3px;color:#ffffff">475</div>
<div class="t n" style="left:461.9px;top:227.6px;width:25.3px;color:#ffffff">4</div>
<div style="left:459.86px;top:190.18px;width:26.3px;height:11.15px;background:rgba(205,40,40,.42);border:1px solid #d25a5a"></div>
<div style="left:459.86px;top:222.12px;width:26.3px;height:11.15px;background:rgba(0,200,205,.30);border:1px solid #12c6d2"></div>
<div style="left:489.72px;top:184.85px;width:25.3px;height:75.15px;background:#363636;border:1px solid #8e8e8e"></div>
<div style="left:490.72px;top:185.85px;width:23.3px;height:9.65px;background:#0d6b99;"></div>
<div class="t n" style="left:489.7px;top:185.1px;width:25.3px;color:#c6f26e">126</div>
<div class="t n" style="left:489.7px;top:195.7px;width:25.3px;color:#ffffff">200</div>
<div class="t n" style="left:489.7px;top:206.3px;width:25.3px;color:#ffffff">299</div>
<div class="t n" style="left:489.7px;top:217.0px;width:25.3px;color:#ffffff">402</div>
<div class="t n" style="left:489.7px;top:227.6px;width:25.3px;color:#ffffff">224</div>
<div class="t n" style="left:489.7px;top:238.3px;width:25.3px;color:#ffffff">229</div>
<div class="t n" style="left:489.7px;top:248.9px;width:25.3px;color:#ffffff">16</div>
<div style="left:487.72px;top:243.43px;width:26.3px;height:11.15px;background:rgba(0,200,205,.30);border:1px solid #12c6d2"></div>
<div style="left:487.12px;top:197.2px;width:3px;height:19.0px;background:#e8143c;"></div>
<div style="left:517.58px;top:195.5px;width:25.3px;height:32.55px;background:#363636;border:1px solid #8e8e8e"></div>
<div style="left:518.58px;top:196.5px;width:23.3px;height:9.65px;background:#0d6b99;"></div>
<div style="left:518.58px;top:217.4px;width:23.3px;height:9.85px;background:#5b4bb5;"></div>
<div class="t n" style="left:517.6px;top:195.7px;width:25.3px;color:#c6f26e">85</div>
<div class="t n" style="left:517.6px;top:206.3px;width:25.3px;color:#ffffff">383</div>
<div class="t n" style="left:517.6px;top:217.0px;width:25.3px;color:#ffffff">43</div>
<div style="left:515.58px;top:211.47px;width:26.3px;height:11.15px;background:rgba(0,200,205,.30);border:1px solid #12c6d2"></div>
<div style="left:514.98px;top:202px;width:3px;height:14px;background:#00d2e0;"></div>
<svg style="left:216px;top:184.8px" width="7" height="11"><path d="M0 0L6.500 5.500L0 11z" fill="#00e8f0"/></svg>
<svg style="left:271px;top:206.0px" width="7" height="11"><path d="M0 0L6.500 5.500L0 11z" fill="#ffee00"/></svg>
<svg style="left:277px;top:174.5px" width="7" height="11"><path d="M6.500 0L0 5.500L6.500 11z" fill="#00e8f0"/></svg>
<svg style="left:250px;top:227.0px" width="7" height="11"><path d="M6.500 0L0 5.500L6.500 11z" fill="#ffee00"/></svg>
<svg style="left:26px;top:292.0px" width="7" height="11"><path d="M6.500 0L0 5.500L6.500 11z" fill="#ffee00"/></svg>
<div style="left:0px;top:167.8px;width:700px;height:1.4px;background:#ff1a1a;"></div>
<div style="left:0px;top:200.8px;width:700px;height:1.3px;background:#e8502e;"></div>
<div style="left:276px;top:199.7px;width:330px;height:2.8px;background:linear-gradient(#ff5030,#ff0808 35%,#ff0808 65%,#ff5030);"></div>
<div style="left:0px;top:232px;width:700px;height:1.2px;background:#0f9a9a;"></div>
<div class="t" style="left:547px;top:209px;font-size:12.5px;color:#d0dcf0;letter-spacing:0.121px;font-weight:bold;">15:00:26</div>
<div class="t" style="left:547px;top:222px;font-size:12.5px;color:#d0dcf0;letter-spacing:0.382px;font-weight:bold;">635</div>
<div class="t" style="left:458px;top:101px;font-size:15.5px;color:#fff;letter-spacing:-0.309px;">Остановка цены под уровнем.</div>
<div class="t" style="left:458px;top:120px;font-size:15.5px;color:#fff;letter-spacing:-0.371px;">Вход советником.</div>
<div style="left:686px;top:0px;width:1.2px;height:426px;background:#b4c6e4;"></div>
<div style="left:686px;top:6.5px;width:12.5px;height:1px;background:#b4c6e4;"></div>
<div style="left:687px;top:17.1px;width:5px;height:1px;background:#6e6e6e;"></div>
<div class="t ps" style="left:700px;top:0.5px;width:61px;color:#b4c6e4">4237.00</div>
<div style="left:686px;top:27.97px;width:12.5px;height:1px;background:#b4c6e4;"></div>
<div style="left:687px;top:38.57px;width:5px;height:1px;background:#6e6e6e;"></div>
<div class="t ps" style="left:700px;top:22.0px;width:61px;color:#b4c6e4">4236.00</div>
<div style="left:686px;top:49.44px;width:12.5px;height:1px;background:#b4c6e4;"></div>
<div style="left:687px;top:60.04px;width:5px;height:1px;background:#6e6e6e;"></div>
<div class="t ps" style="left:700px;top:43.4px;width:61px;color:#b4c6e4">4235.00</div>
<div style="left:686px;top:70.91px;width:12.5px;height:1px;background:#b4c6e4;"></div>
<div style="left:687px;top:81.51px;width:5px;height:1px;background:#6e6e6e;"></div>
<div class="t ps" style="left:700px;top:64.9px;width:61px;color:#b4c6e4">4234.00</div>
<div style="left:686px;top:92.38px;width:12.5px;height:1px;background:#b4c6e4;"></div>
<div style="left:687px;top:102.98px;width:5px;height:1px;background:#6e6e6e;"></div>
<div class="t ps" style="left:700px;top:86.4px;width:61px;color:#b4c6e4">4233.00</div>
<div style="left:686px;top:113.85px;width:12.5px;height:1px;background:#b4c6e4;"></div>
<div style="left:687px;top:124.45px;width:5px;height:1px;background:#6e6e6e;"></div>
<div class="t ps" style="left:700px;top:107.8px;width:61px;color:#b4c6e4">4232.00</div>
<div style="left:686px;top:135.32px;width:12.5px;height:1px;background:#b4c6e4;"></div>
<div style="left:687px;top:145.92px;width:5px;height:1px;background:#6e6e6e;"></div>
<div class="t ps" style="left:700px;top:129.3px;width:61px;color:#b4c6e4">4231.00</div>
<div style="left:686px;top:156.79px;width:12.5px;height:1px;background:#b4c6e4;"></div>
<div style="left:687px;top:167.39px;width:5px;height:1px;background:#6e6e6e;"></div>
<div class="t ps" style="left:700px;top:150.8px;width:61px;color:#b4c6e4">4230.00</div>
<div style="left:686px;top:178.26px;width:12.5px;height:1px;background:#b4c6e4;"></div>
<div style="left:687px;top:188.86px;width:5px;height:1px;background:#6e6e6e;"></div>
<div class="t ps" style="left:700px;top:172.3px;width:61px;color:#b4c6e4">4229.00</div>
<div style="left:686px;top:199.73px;width:12.5px;height:1px;background:#b4c6e4;"></div>
<div style="left:687px;top:210.33px;width:5px;height:1px;background:#6e6e6e;"></div>
<div class="t ps" style="left:700px;top:193.7px;width:61px;color:#b4c6e4">4228.00</div>
<div style="left:686px;top:221.2px;width:12.5px;height:1px;background:#b4c6e4;"></div>
<div style="left:687px;top:231.8px;width:5px;height:1px;background:#6e6e6e;"></div>
<div class="t ps" style="left:700px;top:215.2px;width:61px;color:#b4c6e4">4227.00</div>
<div style="left:686px;top:242.67px;width:12.5px;height:1px;background:#b4c6e4;"></div>
<div style="left:687px;top:253.27px;width:5px;height:1px;background:#6e6e6e;"></div>
<div class="t ps" style="left:700px;top:236.7px;width:61px;color:#b4c6e4">4226.00</div>
<div style="left:686px;top:264.14px;width:12.5px;height:1px;background:#b4c6e4;"></div>
<div style="left:687px;top:274.74px;width:5px;height:1px;background:#6e6e6e;"></div>
<div class="t ps" style="left:700px;top:258.1px;width:61px;color:#b4c6e4">4225.00</div>
<div style="left:686px;top:285.61px;width:12.5px;height:1px;background:#b4c6e4;"></div>
<div style="left:687px;top:296.21px;width:5px;height:1px;background:#6e6e6e;"></div>
<div class="t ps" style="left:700px;top:279.6px;width:61px;color:#b4c6e4">4224.00</div>
<div style="left:686px;top:307.08px;width:12.5px;height:1px;background:#b4c6e4;"></div>
<div style="left:687px;top:317.68px;width:5px;height:1px;background:#6e6e6e;"></div>
<div class="t ps" style="left:700px;top:301.1px;width:61px;color:#b4c6e4">4223.00</div>
<div style="left:686px;top:328.55px;width:12.5px;height:1px;background:#b4c6e4;"></div>
<div style="left:687px;top:339.15px;width:5px;height:1px;background:#6e6e6e;"></div>
<div class="t ps" style="left:700px;top:322.5px;width:61px;color:#b4c6e4">4222.00</div>
<div style="left:686px;top:350.02px;width:12.5px;height:1px;background:#b4c6e4;"></div>
<div style="left:687px;top:360.62px;width:5px;height:1px;background:#6e6e6e;"></div>
<div class="t ps" style="left:700px;top:344.0px;width:61px;color:#b4c6e4">4221.00</div>
<div style="left:686px;top:371.49px;width:12.5px;height:1px;background:#b4c6e4;"></div>
<div class="t ps" style="left:700px;top:365.5px;width:61px;color:#b4c6e4">4220.00</div>
<div style="left:687px;top:-3.7px;width:5px;height:1px;background:#6e6e6e;"></div>
<div style="left:579px;top:159.25px;width:103px;height:18.5px;background:#a8a8a8;border:1px solid #6e6e6e"></div>
<div style="left:581px;top:161.25px;width:99px;height:14.5px;background:#ff0a0a;"></div>
<div style="left:665px;top:161.25px;width:15px;height:14.5px;background:#ff6347;border-left:1px solid #777"></div>
<svg style="left:667px;top:163.5px" width="11" height="10"><path d="M.5 0l10 10M10.500 0l-10 10" stroke="#111" stroke-width="1.100"/></svg>
<div class="t" style="left:584px;top:162.0px;font-size:13.5px;color:#000;letter-spacing:-0.592px;white-space:pre;">Stop Loss   -7</div>
<div style="left:599px;top:192.35px;width:83px;height:18.5px;background:#a8a8a8;border:1px solid #6e6e6e"></div>
<div style="left:601px;top:194.35px;width:79px;height:14.5px;background:#ff6347;"></div>
<div style="left:665px;top:194.35px;width:15px;height:14.5px;background:#ff6347;border-left:1px solid #777"></div>
<svg style="left:667px;top:196.60000000000002px" width="11" height="10"><path d="M.5 0l10 10M10.500 0l-10 10" stroke="#111" stroke-width="1.100"/></svg>
<div class="t" style="left:604px;top:195.10000000000002px;font-size:13.5px;color:#000;letter-spacing:-0.398px;white-space:pre;">Sell  1,  -2</div>
<div style="left:591.5px;top:224.05px;width:90.5px;height:17.5px;background:#a8a8a8;border:1px solid #6e6e6e"></div>
<div style="left:593.5px;top:226.05px;width:86.5px;height:13.5px;background:#0e8c8c;"></div>
<div style="left:665px;top:226.05px;width:15px;height:13.5px;background:#ff6347;border-left:1px solid #777"></div>
<svg style="left:667px;top:227.8px" width="11" height="10"><path d="M.5 0l10 10M10.500 0l-10 10" stroke="#111" stroke-width="1.100"/></svg>
<div class="t" style="left:596.5px;top:226.3px;font-size:13.5px;color:#000;letter-spacing:-0.627px;white-space:pre;">Buy Limit  1</div>
<div style="left:682px;top:167.9px;width:17px;height:1.3px;background:#ff1a1a;"></div>
<div style="left:682px;top:200.9px;width:17px;height:1.3px;background:#ff4a2a;"></div>
<div style="left:682px;top:232.1px;width:17px;height:1.2px;background:#0f9a9a;"></div>
<svg style="left:690.5px;top:195.60000000000002px" width="9" height="12"><path d="M0 6L9 0v12z" fill="#8c8c8c"/></svg>
<div style="left:699px;top:159.25px;width:66.5px;height:18.5px;background:#a8a8a8;border:1px solid #6e6e6e"></div>
<div style="left:701px;top:161.25px;width:62.5px;height:14.5px;background:#ff0a0a;"></div>
<div class="t" style="left:714.5px;top:162.0px;font-size:13.5px;color:#000;letter-spacing:-0.399px;">4229.75</div>
<div style="left:699px;top:192.35px;width:66.5px;height:18.5px;background:#a8a8a8;border:1px solid #6e6e6e"></div>
<div style="left:701px;top:194.35px;width:62.5px;height:14.5px;background:#ff6347;"></div>
<div class="t" style="left:714.5px;top:195.10000000000002px;font-size:13.5px;color:#000;letter-spacing:-0.399px;">4228.00</div>
<div style="left:699px;top:224.05px;width:66.5px;height:17.5px;background:#a8a8a8;border:1px solid #6e6e6e"></div>
<div style="left:701px;top:226.05px;width:62.5px;height:13.5px;background:#0e8c8c;"></div>
<div class="t" style="left:714.5px;top:226.3px;font-size:13.5px;color:#000;letter-spacing:-0.399px;">4226.75</div>
<div class="t" style="left:3px;top:5px;font-size:13px;color:#b4c6e4;letter-spacing:0.060px;white-space:pre;">Тик  1000</div>
<div style="left:70.0px;top:3.5px;width:15px;height:15px;background:#000;border:1px solid #b4c6e4"></div>
<svg style="left:70.0px;top:3.5px" width="15" height="15"><path d="M7.500 3v9M3 7.500h9" stroke="#b4c6e4" stroke-width="1.200"/></svg>
<div style="left:88.03px;top:3.5px;width:15px;height:15px;background:#6d7f9e;border:1px solid #b4c6e4"></div>
<div class="t" style="left:88.03px;top:5.8px;width:15px;text-align:center;font-size:11px;color:#b4c6e4">H</div>
<div style="left:106.06px;top:3.5px;width:15px;height:15px;background:#000;border:1px solid #b4c6e4"></div>
<svg style="left:106.06px;top:3.5px" width="15" height="15"><path d="M3 7.500h9" stroke="#b4c6e4" stroke-width="2"/></svg>
<div style="left:124.09px;top:3.5px;width:15px;height:15px;background:#000;border:1px solid #b4c6e4"></div>
<svg style="left:124.09px;top:3.5px" width="15" height="15"><path d="M7.500 2.500v10" stroke="#b4c6e4" stroke-width="2"/></svg>
<div style="left:142.12px;top:3.5px;width:15px;height:15px;background:#000;border:1px solid #b4c6e4"></div>
<svg style="left:142.12px;top:3.5px" width="15" height="15"><path d="M3 12.500L12 2.500" stroke="#b4c6e4" stroke-width="1.300"/></svg>
<div style="left:160.15px;top:3.5px;width:15px;height:15px;background:#000;border:1px solid #b4c6e4"></div>
<svg style="left:160.15px;top:3.5px" width="15" height="15"><path d="M3 4h9M3 6.500h7M3 9h8M3 11.500h5" stroke="#b4c6e4" stroke-width="1"/></svg>
<div style="left:178.18px;top:3.5px;width:15px;height:15px;background:#000;border:1px solid #b4c6e4"></div>
<svg style="left:178.18px;top:3.5px" width="15" height="15"><path d="M3 3.500h9M3 6h9M3 8.500h5M3 11h5" stroke="#b4c6e4" stroke-width="1"/><path d="M9 8.500h3.500M9 10.500h2.500M9.500 8v5" stroke="#b4c6e4" stroke-width="1.200"/></svg>
<div style="left:196.21px;top:3.5px;width:15px;height:15px;background:#000;border:1px solid #b4c6e4"></div>
<svg style="left:196.21px;top:3.5px" width="15" height="15"><circle cx="7.500" cy="7.500" r="4.300" fill="#b4c6e4"/></svg>
<div style="left:214.24px;top:3.5px;width:15px;height:15px;background:#000;border:1px solid #b4c6e4"></div>
<div class="t" style="left:214.24px;top:5.8px;width:15px;text-align:center;font-size:11px;color:#b4c6e4">P</div>
<div style="left:232.27px;top:3.5px;width:15px;height:15px;background:#000;border:1px solid #b4c6e4"></div>
<svg style="left:232.27px;top:3.5px" width="15" height="15"><text x="3" y="11" font-size="10.500" fill="#b4c6e4" font-family="Liberation Sans">P</text><path d="M9 8.500v4M9 10h2.500v2.500" stroke="#b4c6e4" stroke-width="1" fill="none"/></svg>
<div style="left:250.3px;top:3.5px;width:15px;height:15px;background:#000;border:1px solid #b4c6e4"></div>
<div class="t" style="left:250.3px;top:5.8px;width:15px;text-align:center;font-size:11px;color:#b4c6e4">C</div>
<svg style="left:268.33000000000004px;top:3.5px" width="8" height="15"><path d="M6.500 0v15" stroke="#b4c6e4" stroke-width="1.200"/><path d="M4.500 4.500v6L1 7.500z" fill="#b4c6e4"/></svg>
<div style="left:277px;top:3px;width:84px;height:17px;background:#000;border:1px solid #b4c6e4"></div>
<div class="t" style="left:281px;top:5px;font-size:13px;color:#b4c6e4;letter-spacing:-0.151px;">volume</div>
<svg style="left:349.5px;top:8px" width="8" height="8"><path d="M0 0h8L4 7.500z" fill="#b4c6e4"/><path d="M2.500 1.200h3L4 4z" fill="#3a4660"/></svg>
<div style="left:362px;top:3px;width:42px;height:17px;background:#000;border:1px solid #b4c6e4"></div>
<div class="t" style="left:366px;top:5px;font-size:13px;color:#b4c6e4;letter-spacing:-0.229px;">2</div>
<svg style="left:390px;top:4px" width="13" height="15"><path d="M.5 0v15" stroke="#b4c6e4"/><path d="M1 7.500h12" stroke="#b4c6e4"/><path d="M3 5.500h8L7 1zM3 9.500h8L7 14z" fill="#b4c6e4"/></svg>
<div style="left:417px;top:3.5px;width:15px;height:15px;background:#000;border:1px solid #b4c6e4"></div>
<div class="t" style="left:417px;top:5.8px;width:15px;text-align:center;font-size:11px;color:#b4c6e4">A</div>
<div style="left:435px;top:3.5px;width:15px;height:15px;background:#6d7f9e;border:1px solid #b4c6e4"></div>
<svg style="left:435px;top:3.5px" width="15" height="15"><path d="M2.500 7.500h9" stroke="#e9eef9" stroke-width="1.300"/><path d="M8.500 4.500l3.500 3-3.500 3z" fill="#e9eef9"/></svg>
<div style="left:453px;top:3.5px;width:15px;height:15px;background:#6d7f9e;border:1px solid #b4c6e4"></div>
<svg style="left:453px;top:3.5px" width="15" height="15"><path d="M7.500 2.500v10" stroke="#e9eef9" stroke-width="2"/><path d="M4 2.500h7l-2.500 2h-2zM4 12.500h7l-2.500-2h-2z" fill="#e9eef9"/></svg>
<div style="left:471px;top:3.5px;width:15px;height:15px;background:#6d7f9e;border:1px solid #b4c6e4"></div>
<div class="t" style="left:471px;top:5.8px;width:15px;text-align:center;font-size:11px;color:#b4c6e4">M</div>
<svg style="left:536px;top:0px" width="12" height="6"><path d="M0 0h12L6 6z" fill="#c4d4f0"/></svg>
<div style="left:0px;top:425px;width:767px;height:1.2px;background:#b4c6e4;"></div>
<div style="left:0px;top:446.2px;width:767px;height:1.2px;background:#b4c6e4;"></div>
<svg style="left:2.5px;top:404px" width="18" height="18"><path d="M1.500 1L8.500 8" stroke="#dcdcdc" stroke-width="1.100"/><path d="M9.200 9L15.500 15.300" stroke="#f5b800" stroke-width="3.300" stroke-linecap="round"/><path d="M10 9.200l5 5" stroke="#ffe88a" stroke-width="1"/><path d="M2.800 12.700L12.300 3.200" stroke="#ececec" stroke-width="2.200"/><path d="M12.200 .7a2.500 2.500 0 1 0 3.600 3.600" fill="none" stroke="#ececec" stroke-width="1.700"/><path d="M3 12.500l-2.800 .2M3 12.500l-.2 2.900" stroke="#ececec" stroke-width="1.700" stroke-linecap="round"/></svg>
<div class="t" style="left:25px;top:407px;font-size:13px;color:#b4c6e4;letter-spacing:0.008px;white-space:pre;">O: 4225.00  H: 4226.25  L: 4223.75  C: 4226.00</div>
<div class="t" style="left:0px;top:451px;font-size:12.5px;color:#c0cce0;letter-spacing:-1.125px;">:36</div>
<div class="t" style="left:79px;top:451px;font-size:12.5px;color:#c0cce0;letter-spacing:-0.855px;">06:45</div>
<div class="t" style="left:169px;top:451px;font-size:12.5px;color:#c0cce0;letter-spacing:-0.855px;">07:29</div>
<div class="t" style="left:259px;top:451px;font-size:12.5px;color:#c0cce0;letter-spacing:-0.855px;">08:00</div>
<div class="t" style="left:349px;top:451px;font-size:12.5px;color:#c0cce0;letter-spacing:-0.855px;">08:31</div>
<div class="t" style="left:439px;top:451px;font-size:12.5px;color:#c0cce0;letter-spacing:-0.855px;">09:13</div>
<div style="left:529px;top:449px;width:12px;height:14px;border:1px solid #b4c6e4"></div>
</div>
<div style="left:785px;top:97px;width:579px;height:470px;overflow:hidden">
<div style="left:2px;top:91px;width:18.5px;height:3px;background:#000;border:1px solid #6c6c6c"></div>
<div style="left:2px;top:95px;width:18.5px;height:3px;background:#000;border:1px solid #6c6c6c"></div>
<div style="left:2px;top:99px;width:100.6px;height:3px;background:#000;border:1px solid #6c6c6c"></div>
<div style="left:2px;top:103px;width:94.5px;height:3px;background:#000;border:1px solid #6c6c6c"></div>
<div style="left:2px;top:107px;width:168px;height:3px;background:#000;border:1px solid #6c6c6c"></div>
<div style="left:2px;top:111px;width:170.6px;height:3px;background:#000;border:1px solid #6c6c6c"></div>
<div style="left:2px;top:115px;width:152.6px;height:3px;background:#000;border:1px solid #6c6c6c"></div>
<div style="left:2px;top:119px;width:175px;height:3px;background:#000;border:1px solid #6c6c6c"></div>
<div style="left:2px;top:123px;width:221px;height:3px;background:#000;border:1px solid #6c6c6c"></div>
<div style="left:2px;top:131px;width:241px;height:3px;background:#000;border:1px solid #6c6c6c"></div>
<div style="left:2px;top:135px;width:261.5px;height:3px;background:#000;border:1px solid #6c6c6c"></div>
<div style="left:2px;top:139px;width:326.8px;height:3px;background:#000;border:1px solid #6c6c6c"></div>
<div style="left:2px;top:144px;width:294.8px;height:3px;background:#000;border:1px solid #6c6c6c"></div>
<div style="left:2px;top:148px;width:367.8px;height:3px;background:#000;border:1px solid #6c6c6c"></div>
<div style="left:2px;top:156px;width:403.7px;height:3px;background:#000;border:1px solid #6c6c6c"></div>
<div style="left:2px;top:160px;width:363px;height:3px;background:#000;border:1px solid #6c6c6c"></div>
<div style="left:2px;top:164px;width:341.7px;height:3px;background:#000;border:1px solid #6c6c6c"></div>
<div style="left:2px;top:168px;width:369.8px;height:3px;background:#000;border:1px solid #6c6c6c"></div>
<div style="left:2px;top:172px;width:334.6px;height:3px;background:#000;border:1px solid #6c6c6c"></div>
<div style="left:2px;top:176px;width:345.8px;height:3px;background:#000;border:1px solid #6c6c6c"></div>
<div style="left:2px;top:180px;width:297.9px;height:3px;background:#000;border:1px solid #6c6c6c"></div>
<div style="left:2px;top:184px;width:174px;height:3px;background:#000;border:1px solid #6c6c6c"></div>
<div style="left:2px;top:188px;width:141.6px;height:3px;background:#000;border:1px solid #6c6c6c"></div>
<div style="left:2px;top:192px;width:108px;height:3px;background:#000;border:1px solid #6c6c6c"></div>
<div style="left:2px;top:196px;width:71px;height:3px;background:#000;border:1px solid #6c6c6c"></div>
<div style="left:2px;top:200px;width:51.7px;height:3px;background:#000;border:1px solid #6c6c6c"></div>
<div style="left:2px;top:204px;width:74.7px;height:3px;background:#000;border:1px solid #6c6c6c"></div>
<div style="left:2px;top:208px;width:51.5px;height:3px;background:#000;border:1px solid #6c6c6c"></div>
<div style="left:2px;top:212px;width:40.3px;height:3px;background:#000;border:1px solid #6c6c6c"></div>
<div style="left:2px;top:216px;width:15.7px;height:3px;background:#000;border:1px solid #6c6c6c"></div>
<div style="left:2px;top:220px;width:8.3px;height:3px;background:#000;border:1px solid #6c6c6c"></div>
<div style="left:2px;top:224px;width:2.5px;height:3px;background:#000;border:1px solid #6c6c6c"></div>
<div style="left:2px;top:228px;width:1.5px;height:3px;background:#000;border:1px solid #6c6c6c"></div>
<div style="left:2px;top:232px;width:1.5px;height:3px;background:#000;border:1px solid #6c6c6c"></div>
<div style="left:1px;top:128.4px;width:220px;height:2px;background:#74849c;"></div>
<div style="left:221px;top:128.8px;width:285px;height:1.1px;background:#8696b2;"></div>
<div style="left:223px;top:123.8px;width:203px;height:3.6px;background:#1a1208;border:1px solid #e2b98a"></div>
<div style="left:176px;top:183.8px;width:250px;height:3.6px;background:#1a1208;border:1px solid #e2b98a"></div>
<div style="left:2px;top:152px;width:424px;height:3.2px;background:#64951c;border:1px solid #80cc22"></div>
<div style="left:1px;top:160.7px;width:518px;height:1.3px;background:repeating-linear-gradient(90deg,#fff 0 3px,transparent 3px 6px)"></div>
<svg style="left:38.3px;top:185.5px" width="1" height="1"><circle r="8.1" fill="rgba(240,170,170,.92)" stroke="#f0b0b0" stroke-width="1"/></svg>
<svg style="left:58.1px;top:173.6px" width="1" height="1"><circle r="7.1" fill="rgba(240,250,250,.95)" stroke="#ffffff" stroke-width="1"/></svg>
<svg style="left:70.5px;top:161.8px" width="1" height="1"><circle r="7.1" fill="rgba(250,232,232,.95)" stroke="#ffeaea" stroke-width="1"/></svg>
<svg style="left:102.5px;top:117.3px" width="1" height="1"><circle r="7.6" fill="rgba(255,255,255,.97)" stroke="#ffffff" stroke-width="1"/></svg>
<svg style="left:121.2px;top:121.7px" width="1" height="1"><circle r="5.4" fill="rgba(225,100,100,.85)" stroke="#f08080" stroke-width="1" stroke-dasharray="2 1.500"/><g stroke="#f08080" stroke-width=".8" opacity=".75"><path d="M-3.6 -4h7.3"/><path d="M-5.0 -2h10.0"/><path d="M-5.4 0h10.8"/><path d="M-5.0 2h10.0"/><path d="M-3.6 4h7.3"/></g></svg>
<svg style="left:153.3px;top:177.9px" width="1" height="1"><circle r="8.1" fill="rgba(225,95,95,.8)" stroke="#ff8a8a" stroke-width="1" stroke-dasharray="2 1.500"/><g stroke="#ff8a8a" stroke-width=".8" opacity=".75"><path d="M-4.1 -7h8.2"/><path d="M-6.4 -5h12.7"/><path d="M-7.5 -3h15.0"/><path d="M-8.0 -1h16.1"/><path d="M-8.0 1h16.1"/><path d="M-7.5 3h15.0"/><path d="M-6.4 5h12.7"/><path d="M-4.1 7h8.2"/></g></svg>
<svg style="left:166.3px;top:149.1px" width="1" height="1"><circle r="8.5" fill="rgba(242,200,200,.93)" stroke="#f4d0d0" stroke-width="1"/></svg>
<svg style="left:185.3px;top:109.3px" width="1" height="1"><circle r="7.6" fill="rgba(130,215,218,.85)" stroke="#a0f0f0" stroke-width="1"/></svg>
<svg style="left:197.3px;top:129.6px" width="1" height="1"><circle r="7.6" fill="rgba(225,100,100,.8)" stroke="#f08080" stroke-width="1" stroke-dasharray="2 1.500"/><g stroke="#f08080" stroke-width=".8" opacity=".75"><path d="M-4.7 -6h9.3"/><path d="M-6.5 -4h12.9"/><path d="M-7.3 -2h14.7"/><path d="M-7.6 0h15.2"/><path d="M-7.3 2h14.7"/><path d="M-6.5 4h12.9"/><path d="M-4.7 6h9.3"/></g></svg>
<svg style="left:217.4px;top:137.6px" width="1" height="1"><circle r="6.4" fill="rgba(245,252,252,.95)" stroke="#ffffff" stroke-width="1"/></svg>
<svg style="left:229.5px;top:121.2px" width="1" height="1"><circle r="5.4" fill="rgba(225,130,130,.85)" stroke="#f09a9a" stroke-width="1"/></svg>
<svg style="left:242.5px;top:97.0px" width="1" height="1"><circle r="8.5" fill="rgba(50,170,178,.9)" stroke="#60e0e8" stroke-width="1"/></svg>
<svg style="left:274.3px;top:97.5px" width="1" height="1"><circle r="5.4" fill="rgba(215,110,110,.85)" stroke="#f08a8a" stroke-width="1"/></svg>
<svg style="left:318.0px;top:169.6px" width="1" height="1"><circle r="8" fill="rgba(225,80,80,.75)" stroke="#ff8a8a" stroke-width="1" stroke-dasharray="2 1.500"/><g stroke="#ff8a8a" stroke-width=".8" opacity=".75"><path d="M-3.9 -7h7.7"/><path d="M-6.2 -5h12.5"/><path d="M-7.4 -3h14.8"/><path d="M-7.9 -1h15.9"/><path d="M-7.9 1h15.9"/><path d="M-7.4 3h14.8"/><path d="M-6.2 5h12.5"/><path d="M-3.9 7h7.7"/></g></svg>
<svg style="left:337.5px;top:133.3px" width="1" height="1"><circle r="5.2" fill="rgba(110,215,220,.85)" stroke="#60e8f0" stroke-width="1"/></svg>
<svg style="left:369.2px;top:133.3px" width="1" height="1"><circle r="6" fill="rgba(215,80,80,.8)" stroke="#ff7070" stroke-width="1" stroke-dasharray="2 1.500"/><g stroke="#ff7070" stroke-width=".8" opacity=".75"><path d="M-3.3 -5h6.6"/><path d="M-5.2 -3h10.4"/><path d="M-5.9 -1h11.8"/><path d="M-5.9 1h11.8"/><path d="M-5.2 3h10.4"/><path d="M-3.3 5h6.6"/></g></svg>
<svg style="left:388.3px;top:153.4px" width="1" height="1"><circle r="5.4" fill="rgba(150,230,235,.85)" stroke="#a0f4f8" stroke-width="1"/></svg>
<div style="left:0px;top:166px;width:1px;height:3.4px;background:#a6a6a6;"></div>
<div style="left:-2px;top:165.7px;width:5px;height:4px;background:#32d232;border:1px solid #9c9c9c"></div>
<div style="left:6px;top:157.6px;width:1px;height:16.0px;background:#a6a6a6;"></div>
<div style="left:4px;top:162.1px;width:5px;height:7.3px;background:#e01414;border:1px solid #9c9c9c"></div>
<div style="left:13px;top:157.6px;width:1px;height:11.8px;background:#a6a6a6;"></div>
<div style="left:11px;top:165.2px;width:5px;height:4px;background:#e01414;border:1px solid #9c9c9c"></div>
<div style="left:19px;top:169.4px;width:1px;height:12.2px;background:#a6a6a6;"></div>
<div style="left:17px;top:169.4px;width:5px;height:7.6px;background:#e01414;border:1px solid #9c9c9c"></div>
<div style="left:25px;top:169.4px;width:1px;height:8.5px;background:#a6a6a6;"></div>
<div style="left:23px;top:172.8px;width:5px;height:1px;background:#a6a6a6;"></div>
<div style="left:32px;top:157.6px;width:1px;height:19.4px;background:#a6a6a6;"></div>
<div style="left:30px;top:161.8px;width:5px;height:15.2px;background:#32d232;border:1px solid #9c9c9c"></div>
<div style="left:38px;top:157.6px;width:1px;height:32.1px;background:#a6a6a6;"></div>
<div style="left:36px;top:161.8px;width:5px;height:23.2px;background:#e01414;border:1px solid #9c9c9c"></div>
<div style="left:44px;top:157.6px;width:1px;height:35.4px;background:#a6a6a6;"></div>
<div style="left:42px;top:157.6px;width:5px;height:27.9px;background:#32d232;border:1px solid #9c9c9c"></div>
<div style="left:51px;top:149px;width:1px;height:20.4px;background:#a6a6a6;"></div>
<div style="left:49px;top:157.45px;width:5px;height:4px;background:#e01414;border:1px solid #9c9c9c"></div>
<div style="left:57px;top:153.3px;width:1px;height:28.0px;background:#a6a6a6;"></div>
<div style="left:55px;top:161.8px;width:5px;height:11.0px;background:#e01414;border:1px solid #9c9c9c"></div>
<div style="left:63px;top:169.4px;width:1px;height:16.1px;background:#a6a6a6;"></div>
<div style="left:61px;top:169.35px;width:5px;height:4px;background:#32d232;border:1px solid #9c9c9c"></div>
<div style="left:70px;top:149px;width:1px;height:20.4px;background:#a6a6a6;"></div>
<div style="left:68px;top:161.8px;width:5px;height:7.6px;background:#32d232;border:1px solid #9c9c9c"></div>
<div style="left:76px;top:144.9px;width:1px;height:24.5px;background:#a6a6a6;"></div>
<div style="left:74px;top:149.4px;width:5px;height:11.6px;background:#32d232;border:1px solid #9c9c9c"></div>
<div style="left:83px;top:144.9px;width:1px;height:12.7px;background:#a6a6a6;"></div>
<div style="left:81px;top:149.5px;width:5px;height:4px;background:#e01414;border:1px solid #9c9c9c"></div>
<div style="left:89px;top:137.3px;width:1px;height:19.9px;background:#a6a6a6;"></div>
<div style="left:87px;top:141.5px;width:5px;height:15.7px;background:#32d232;border:1px solid #9c9c9c"></div>
<div style="left:95px;top:125.4px;width:1px;height:20.3px;background:#a6a6a6;"></div>
<div style="left:93px;top:133.5px;width:5px;height:8.0px;background:#32d232;border:1px solid #9c9c9c"></div>
<div style="left:102px;top:112.7px;width:1px;height:20.7px;background:#a6a6a6;"></div>
<div style="left:100px;top:117.4px;width:5px;height:16.0px;background:#32d232;border:1px solid #9c9c9c"></div>
<div style="left:108px;top:100.9px;width:1px;height:16.9px;background:#a6a6a6;"></div>
<div style="left:106px;top:116.8px;width:5px;height:1px;background:#a6a6a6;"></div>
<div style="left:114px;top:105.4px;width:1px;height:11.9px;background:#a6a6a6;"></div>
<div style="left:112px;top:105.4px;width:5px;height:11.9px;background:#32d232;border:1px solid #9c9c9c"></div>
<div style="left:121px;top:105.4px;width:1px;height:20.0px;background:#a6a6a6;"></div>
<div style="left:119px;top:105.4px;width:5px;height:16.3px;background:#e01414;border:1px solid #9c9c9c"></div>
<div style="left:127px;top:121.7px;width:1px;height:15.9px;background:#a6a6a6;"></div>
<div style="left:125px;top:121.7px;width:5px;height:11.7px;background:#e01414;border:1px solid #9c9c9c"></div>
<div style="left:134px;top:125.4px;width:1px;height:12.2px;background:#a6a6a6;"></div>
<div style="left:132px;top:128.8px;width:5px;height:1px;background:#a6a6a6;"></div>
<div style="left:140px;top:125.4px;width:1px;height:16.1px;background:#a6a6a6;"></div>
<div style="left:138px;top:129.6px;width:5px;height:7.7px;background:#e01414;border:1px solid #9c9c9c"></div>
<div style="left:146px;top:137.3px;width:1px;height:20.3px;background:#a6a6a6;"></div>
<div style="left:144px;top:141.5px;width:5px;height:7.6px;background:#e01414;border:1px solid #9c9c9c"></div>
<div style="left:153px;top:145.7px;width:1px;height:35.6px;background:#a6a6a6;"></div>
<div style="left:151px;top:150.0px;width:5px;height:27px;background:#e01414;border:1px solid #9c9c9c"></div>
<div style="left:159px;top:165.2px;width:1px;height:16.1px;background:#a6a6a6;"></div>
<div style="left:157px;top:169.9px;width:5px;height:7.1px;background:#32d232;border:1px solid #9c9c9c"></div>
<div style="left:165px;top:150px;width:1px;height:23.6px;background:#a6a6a6;"></div>
<div style="left:163px;top:150.0px;width:5px;height:19.4px;background:#32d232;border:1px solid #9c9c9c"></div>
<div style="left:172px;top:137.3px;width:1px;height:11.8px;background:#a6a6a6;"></div>
<div style="left:170px;top:141.5px;width:5px;height:7.6px;background:#32d232;border:1px solid #9c9c9c"></div>
<div style="left:178px;top:121.7px;width:1px;height:27.4px;background:#a6a6a6;"></div>
<div style="left:176px;top:121.7px;width:5px;height:19.8px;background:#32d232;border:1px solid #9c9c9c"></div>
<div style="left:184px;top:101.7px;width:1px;height:23.7px;background:#a6a6a6;"></div>
<div style="left:182px;top:109.3px;width:5px;height:11.9px;background:#32d232;border:1px solid #9c9c9c"></div>
<div style="left:191px;top:109.3px;width:1px;height:16.1px;background:#a6a6a6;"></div>
<div style="left:189px;top:109.1px;width:5px;height:1px;background:#a6a6a6;"></div>
<div style="left:197px;top:109.3px;width:1px;height:28.0px;background:#a6a6a6;"></div>
<div style="left:195px;top:109.3px;width:5px;height:19.5px;background:#e01414;border:1px solid #9c9c9c"></div>
<div style="left:204px;top:109.3px;width:1px;height:19.5px;background:#a6a6a6;"></div>
<div style="left:202px;top:117.4px;width:5px;height:11.4px;background:#32d232;border:1px solid #9c9c9c"></div>
<div style="left:210px;top:117.4px;width:1px;height:11.4px;background:#a6a6a6;"></div>
<div style="left:208px;top:121.7px;width:5px;height:7.1px;background:#e01414;border:1px solid #9c9c9c"></div>
<div style="left:216px;top:125.4px;width:1px;height:16.1px;background:#a6a6a6;"></div>
<div style="left:214px;top:129.6px;width:5px;height:7.7px;background:#e01414;border:1px solid #9c9c9c"></div>
<div style="left:223px;top:129.5px;width:1px;height:7.8px;background:#a6a6a6;"></div>
<div style="left:221px;top:133.4px;width:5px;height:4px;background:#32d232;border:1px solid #9c9c9c"></div>
<div style="left:229px;top:121.7px;width:1px;height:15.9px;background:#a6a6a6;"></div>
<div style="left:227px;top:121.7px;width:5px;height:11.7px;background:#32d232;border:1px solid #9c9c9c"></div>
<div style="left:235px;top:117.4px;width:1px;height:7.7px;background:#a6a6a6;"></div>
<div style="left:233px;top:121.4px;width:5px;height:4px;background:#e01414;border:1px solid #9c9c9c"></div>
<div style="left:242px;top:88.5px;width:1px;height:36.6px;background:#a6a6a6;"></div>
<div style="left:240px;top:97.5px;width:5px;height:27.6px;background:#32d232;border:1px solid #9c9c9c"></div>
<div style="left:248px;top:97.5px;width:1px;height:20.3px;background:#a6a6a6;"></div>
<div style="left:246px;top:97.5px;width:5px;height:11.8px;background:#e01414;border:1px solid #9c9c9c"></div>
<div style="left:255px;top:105.4px;width:1px;height:12.4px;background:#a6a6a6;"></div>
<div style="left:253px;top:105.4px;width:5px;height:7.8px;background:#e01414;border:1px solid #9c9c9c"></div>
<div style="left:261px;top:109.3px;width:1px;height:12.2px;background:#a6a6a6;"></div>
<div style="left:259px;top:109.25px;width:5px;height:4px;background:#e01414;border:1px solid #9c9c9c"></div>
<div style="left:267px;top:97px;width:1px;height:16.6px;background:#a6a6a6;"></div>
<div style="left:265px;top:101.4px;width:5px;height:7.9px;background:#32d232;border:1px solid #9c9c9c"></div>
<div style="left:274px;top:97px;width:1px;height:8.4px;background:#a6a6a6;"></div>
<div style="left:272px;top:97.3px;width:5px;height:1px;background:#a6a6a6;"></div>
<div style="left:280px;top:97.5px;width:1px;height:11.8px;background:#a6a6a6;"></div>
<div style="left:278px;top:97.35px;width:5px;height:4px;background:#e01414;border:1px solid #9c9c9c"></div>
<div style="left:286px;top:105.5px;width:1px;height:8.1px;background:#a6a6a6;"></div>
<div style="left:284px;top:105.35px;width:5px;height:4px;background:#e01414;border:1px solid #9c9c9c"></div>
<div style="left:293px;top:109.5px;width:1px;height:4.1px;background:#a6a6a6;"></div>
<div style="left:291px;top:109.5px;width:5px;height:4.1px;background:#32d232;border:1px solid #9c9c9c"></div>
<div style="left:299px;top:109.5px;width:1px;height:15.7px;background:#a6a6a6;"></div>
<div style="left:297px;top:109.5px;width:5px;height:15.7px;background:#e01414;border:1px solid #9c9c9c"></div>
<div style="left:305px;top:121px;width:1px;height:20.4px;background:#a6a6a6;"></div>
<div style="left:303px;top:125.4px;width:5px;height:16.0px;background:#e01414;border:1px solid #9c9c9c"></div>
<div style="left:312px;top:141px;width:1px;height:16.8px;background:#a6a6a6;"></div>
<div style="left:310px;top:140.9px;width:5px;height:1px;background:#a6a6a6;"></div>
<div style="left:318px;top:141.6px;width:1px;height:36.1px;background:#a6a6a6;"></div>
<div style="left:316px;top:141.6px;width:5px;height:27.4px;background:#e01414;border:1px solid #9c9c9c"></div>
<div style="left:325px;top:149px;width:1px;height:33px;background:#a6a6a6;"></div>
<div style="left:323px;top:153.4px;width:5px;height:15.6px;background:#32d232;border:1px solid #9c9c9c"></div>
<div style="left:331px;top:145.3px;width:1px;height:12.5px;background:#a6a6a6;"></div>
<div style="left:329px;top:145.3px;width:5px;height:4.4px;background:#32d232;border:1px solid #9c9c9c"></div>
<div style="left:337px;top:129px;width:1px;height:16.3px;background:#a6a6a6;"></div>
<div style="left:335px;top:133.5px;width:5px;height:11.8px;background:#32d232;border:1px solid #9c9c9c"></div>
<div style="left:344px;top:129.8px;width:1px;height:16.2px;background:#a6a6a6;"></div>
<div style="left:342px;top:133.5px;width:5px;height:4.0px;background:#e01414;border:1px solid #9c9c9c"></div>
<div style="left:350px;top:137.5px;width:1px;height:12.2px;background:#a6a6a6;"></div>
<div style="left:348px;top:137.45px;width:5px;height:4px;background:#e01414;border:1px solid #9c9c9c"></div>
<div style="left:356px;top:137px;width:1px;height:12.7px;background:#a6a6a6;"></div>
<div style="left:354px;top:141.45px;width:5px;height:4px;background:#e01414;border:1px solid #9c9c9c"></div>
<div style="left:363px;top:137px;width:1px;height:12.7px;background:#a6a6a6;"></div>
<div style="left:361px;top:144.8px;width:5px;height:1px;background:#a6a6a6;"></div>
<div style="left:369px;top:125.4px;width:1px;height:19.9px;background:#a6a6a6;"></div>
<div style="left:367px;top:133.5px;width:5px;height:11.8px;background:#32d232;border:1px solid #9c9c9c"></div>
<div style="left:376px;top:121px;width:1px;height:20.6px;background:#a6a6a6;"></div>
<div style="left:374px;top:133.5px;width:5px;height:4.0px;background:#e01414;border:1px solid #9c9c9c"></div>
<div style="left:382px;top:133.5px;width:1px;height:19.9px;background:#a6a6a6;"></div>
<div style="left:380px;top:133.5px;width:5px;height:19.9px;background:#e01414;border:1px solid #9c9c9c"></div>
<div style="left:388px;top:149px;width:1px;height:20.6px;background:#a6a6a6;"></div>
<div style="left:386px;top:152.9px;width:5px;height:1px;background:#a6a6a6;"></div>
<div style="left:395px;top:137.2px;width:1px;height:16.2px;background:#a6a6a6;"></div>
<div style="left:393px;top:145.3px;width:5px;height:8.1px;background:#32d232;border:1px solid #9c9c9c"></div>
<div style="left:401px;top:133px;width:1px;height:12.3px;background:#a6a6a6;"></div>
<div style="left:399px;top:141.45px;width:5px;height:4px;background:#32d232;border:1px solid #9c9c9c"></div>
<div style="left:407px;top:133px;width:1px;height:16.7px;background:#a6a6a6;"></div>
<div style="left:405px;top:137.45px;width:5px;height:4px;background:#32d232;border:1px solid #9c9c9c"></div>
<div style="left:414px;top:133px;width:1px;height:8.4px;background:#a6a6a6;"></div>
<div style="left:412px;top:137.45px;width:5px;height:4px;background:#e01414;border:1px solid #9c9c9c"></div>
<div style="left:420px;top:129.8px;width:1px;height:11.8px;background:#a6a6a6;"></div>
<div style="left:418px;top:129.8px;width:5px;height:7.7px;background:#32d232;border:1px solid #9c9c9c"></div>
<div style="left:36px;top:347px;width:5px;height:79px;background:#a60000;"></div>
<div style="left:49px;top:368.9px;width:5px;height:57.1px;background:#a60000;"></div>
<div style="left:55px;top:366px;width:5px;height:60px;background:#00b9c2;"></div>
<div style="left:68px;top:360px;width:5px;height:66px;background:#a60000;"></div>
<div style="left:74px;top:371.1px;width:5px;height:54.9px;background:#00b9c2;"></div>
<div style="left:93px;top:378px;width:5px;height:48px;background:#a60000;"></div>
<div style="left:100px;top:361.2px;width:5px;height:64.8px;background:#00b9c2;"></div>
<div style="left:106px;top:368px;width:5px;height:58px;background:#00b9c2;"></div>
<div style="left:151px;top:345.9px;width:5px;height:80.1px;background:#a60000;"></div>
<div style="left:157px;top:366px;width:5px;height:60px;background:#a60000;"></div>
<div style="left:163px;top:353.1px;width:5px;height:72.9px;background:#a60000;"></div>
<div style="left:170px;top:380.8px;width:5px;height:45.2px;background:#a60000;"></div>
<div style="left:182px;top:361.2px;width:5px;height:64.8px;background:#00b9c2;"></div>
<div style="left:189px;top:380.8px;width:5px;height:45.2px;background:#a60000;"></div>
<div style="left:195px;top:362px;width:5px;height:64px;background:#a60000;"></div>
<div style="left:214px;top:375.2px;width:5px;height:50.8px;background:#00b9c2;"></div>
<div style="left:221px;top:397.1px;width:5px;height:28.9px;background:#a60000;"></div>
<div style="left:227px;top:385px;width:5px;height:41px;background:#a60000;"></div>
<div style="left:233px;top:396.1px;width:5px;height:29.9px;background:#a60000;"></div>
<div style="left:240px;top:343.1px;width:5px;height:82.9px;background:#00b9c2;"></div>
<div style="left:246px;top:388px;width:5px;height:38px;background:#00b9c2;"></div>
<div style="left:253px;top:403px;width:5px;height:23px;background:#a60000;"></div>
<div style="left:259px;top:405.1px;width:5px;height:20.9px;background:#a60000;"></div>
<div style="left:265px;top:404.2px;width:5px;height:21.8px;background:#00b9c2;"></div>
<div style="left:272px;top:395px;width:5px;height:31px;background:#a60000;"></div>
<div style="left:278px;top:396.1px;width:5px;height:29.9px;background:#a60000;"></div>
<div style="left:284px;top:397.1px;width:5px;height:28.9px;background:#a60000;"></div>
<div style="left:291px;top:405.1px;width:5px;height:20.9px;background:#00b9c2;"></div>
<div style="left:297px;top:398px;width:5px;height:28px;background:#a60000;"></div>
<div style="left:303px;top:379.2px;width:5px;height:46.8px;background:#a60000;"></div>
<div style="left:310px;top:354.1px;width:5px;height:71.9px;background:#00b9c2;"></div>
<div style="left:316px;top:353.1px;width:5px;height:72.9px;background:#a60000;"></div>
<div style="left:323px;top:361.2px;width:5px;height:64.8px;background:#00b9c2;"></div>
<div style="left:329px;top:393px;width:5px;height:33px;background:#00b9c2;"></div>
<div style="left:335px;top:384px;width:5px;height:42px;background:#00b9c2;"></div>
<div style="left:342px;top:396.1px;width:5px;height:29.9px;background:#a60000;"></div>
<div style="left:348px;top:396.1px;width:5px;height:29.9px;background:#a60000;"></div>
<div style="left:354px;top:397.1px;width:5px;height:28.9px;background:#00b9c2;"></div>
<div style="left:361px;top:405.1px;width:5px;height:20.9px;background:#00b9c2;"></div>
<div style="left:367px;top:371.1px;width:5px;height:54.9px;background:#a60000;"></div>
<div style="left:374px;top:387.1px;width:5px;height:38.9px;background:#00b9c2;"></div>
<div style="left:380px;top:403px;width:5px;height:23px;background:#a60000;"></div>
<div style="left:386px;top:381.1px;width:5px;height:44.9px;background:#00b9c2;"></div>
<div style="left:393px;top:400.1px;width:5px;height:25.9px;background:#00b9c2;"></div>
<div style="left:399px;top:402.1px;width:5px;height:23.9px;background:#00b9c2;"></div>
<div style="left:405px;top:408px;width:5px;height:18px;background:#00b9c2;"></div>
<div style="left:412px;top:417px;width:5px;height:9px;background:#a60000;"></div>
<div style="left:418px;top:414px;width:5px;height:12px;background:#00b9c2;"></div>
<div style="left:-2px;top:415px;width:5px;height:11px;background:#a60000;"></div>
<div style="left:4px;top:418px;width:5px;height:8px;background:#00b9c2;"></div>
<div style="left:11px;top:401px;width:5px;height:25px;background:#a60000;"></div>
<div style="left:17px;top:398px;width:5px;height:28px;background:#a60000;"></div>
<div style="left:23px;top:403px;width:5px;height:23px;background:#a60000;"></div>
<div style="left:30px;top:395px;width:5px;height:31px;background:#a60000;"></div>
<div style="left:42px;top:385px;width:5px;height:41px;background:#00b9c2;"></div>
<div style="left:61px;top:393px;width:5px;height:33px;background:#a60000;"></div>
<div style="left:81px;top:395px;width:5px;height:31px;background:#00b9c2;"></div>
<div style="left:87px;top:389px;width:5px;height:37px;background:#00b9c2;"></div>
<div style="left:112px;top:408px;width:5px;height:18px;background:#00b9c2;"></div>
<div style="left:119px;top:389px;width:5px;height:37px;background:#a60000;"></div>
<div style="left:125px;top:393px;width:5px;height:33px;background:#a60000;"></div>
<div style="left:132px;top:397px;width:5px;height:29px;background:#a60000;"></div>
<div style="left:138px;top:389px;width:5px;height:37px;background:#a60000;"></div>
<div style="left:144px;top:387px;width:5px;height:39px;background:#a60000;"></div>
<div style="left:176px;top:385px;width:5px;height:41px;background:#00b9c2;"></div>
<div style="left:202px;top:389px;width:5px;height:37px;background:#a60000;"></div>
<div style="left:208px;top:393px;width:5px;height:33px;background:#a60000;"></div>
<div style="left:0px;top:338px;width:579px;height:1.3px;background:#b4c6e4;"></div>
<div style="left:0px;top:429px;width:579px;height:1.3px;background:#b4c6e4;"></div>
<div style="left:0px;top:450.2px;width:579px;height:1.2px;background:#b4c6e4;"></div>
<div style="left:503px;top:0px;width:1.3px;height:430px;background:#b4c6e4;"></div>
<div style="left:503px;top:3px;width:13px;height:1px;background:#b4c6e4;"></div>
<div class="t ps" style="left:516px;top:-3.8px;width:61px;color:#b4c6e4">4236.00</div>
<div style="left:503px;top:19px;width:13px;height:1px;background:#b4c6e4;"></div>
<div class="t ps" style="left:516px;top:12.4px;width:61px;color:#b4c6e4">4235.00</div>
<div style="left:503px;top:35px;width:13px;height:1px;background:#b4c6e4;"></div>
<div class="t ps" style="left:516px;top:28.5px;width:61px;color:#b4c6e4">4234.00</div>
<div style="left:503px;top:51px;width:13px;height:1px;background:#b4c6e4;"></div>
<div class="t ps" style="left:516px;top:44.6px;width:61px;color:#b4c6e4">4233.00</div>
<div style="left:503px;top:68px;width:13px;height:1px;background:#b4c6e4;"></div>
<div class="t ps" style="left:516px;top:60.8px;width:61px;color:#b4c6e4">4232.00</div>
<div style="left:503px;top:84px;width:13px;height:1px;background:#b4c6e4;"></div>
<div class="t ps" style="left:516px;top:76.9px;width:61px;color:#b4c6e4">4231.00</div>
<div style="left:503px;top:100px;width:13px;height:1px;background:#b4c6e4;"></div>
<div class="t ps" style="left:516px;top:93.1px;width:61px;color:#b4c6e4">4230.00</div>
<div style="left:503px;top:116px;width:13px;height:1px;background:#b4c6e4;"></div>
<div class="t ps" style="left:516px;top:109.2px;width:61px;color:#b4c6e4">4229.00</div>
<div style="left:503px;top:132px;width:13px;height:1px;background:#b4c6e4;"></div>
<div class="t ps" style="left:516px;top:125.4px;width:61px;color:#b4c6e4">4228.00</div>
<div style="left:503px;top:148px;width:13px;height:1px;background:#b4c6e4;"></div>
<div class="t ps" style="left:516px;top:141.5px;width:61px;color:#b4c6e4">4227.00</div>
<div style="left:503px;top:165px;width:13px;height:1px;background:#b4c6e4;"></div>
<div class="t ps" style="left:516px;top:157.7px;width:61px;color:#b4c6e4">4226.00</div>
<div style="left:503px;top:181px;width:13px;height:1px;background:#b4c6e4;"></div>
<div class="t ps" style="left:516px;top:173.8px;width:61px;color:#b4c6e4">4225.00</div>
<div style="left:503px;top:197px;width:13px;height:1px;background:#b4c6e4;"></div>
<div class="t ps" style="left:516px;top:190.0px;width:61px;color:#b4c6e4">4224.00</div>
<div style="left:503px;top:213px;width:13px;height:1px;background:#b4c6e4;"></div>
<div class="t ps" style="left:516px;top:206.1px;width:61px;color:#b4c6e4">4223.00</div>
<div style="left:503px;top:229px;width:13px;height:1px;background:#b4c6e4;"></div>
<div class="t ps" style="left:516px;top:222.3px;width:61px;color:#b4c6e4">4222.00</div>
<div style="left:503px;top:245px;width:13px;height:1px;background:#b4c6e4;"></div>
<div class="t ps" style="left:516px;top:238.4px;width:61px;color:#b4c6e4">4221.00</div>
<div style="left:503px;top:261px;width:13px;height:1px;background:#b4c6e4;"></div>
<div class="t ps" style="left:516px;top:254.6px;width:61px;color:#b4c6e4">4220.00</div>
<div style="left:503px;top:278px;width:13px;height:1px;background:#b4c6e4;"></div>
<div class="t ps" style="left:516px;top:270.7px;width:61px;color:#b4c6e4">4219.00</div>
<div style="left:503px;top:294px;width:13px;height:1px;background:#b4c6e4;"></div>
<div class="t ps" style="left:516px;top:286.9px;width:61px;color:#b4c6e4">4218.00</div>
<div style="left:503px;top:310px;width:13px;height:1px;background:#b4c6e4;"></div>
<div class="t ps" style="left:516px;top:303.0px;width:61px;color:#b4c6e4">4217.00</div>
<div style="left:503px;top:326px;width:13px;height:1px;background:#b4c6e4;"></div>
<div class="t ps" style="left:516px;top:319.2px;width:61px;color:#b4c6e4">4216.00</div>
<div style="left:504px;top:-1px;width:5px;height:1px;background:#808080;"></div>
<div style="left:504px;top:7px;width:5px;height:1px;background:#808080;"></div>
<div style="left:504px;top:11px;width:5px;height:1px;background:#808080;"></div>
<div style="left:504px;top:15px;width:5px;height:1px;background:#808080;"></div>
<div style="left:504px;top:23px;width:5px;height:1px;background:#808080;"></div>
<div style="left:504px;top:27px;width:5px;height:1px;background:#808080;"></div>
<div style="left:504px;top:31px;width:5px;height:1px;background:#808080;"></div>
<div style="left:504px;top:39px;width:5px;height:1px;background:#808080;"></div>
<div style="left:504px;top:43px;width:5px;height:1px;background:#808080;"></div>
<div style="left:504px;top:47px;width:5px;height:1px;background:#808080;"></div>
<div style="left:504px;top:55px;width:5px;height:1px;background:#808080;"></div>
<div style="left:504px;top:60px;width:5px;height:1px;background:#808080;"></div>
<div style="left:504px;top:64px;width:5px;height:1px;background:#808080;"></div>
<div style="left:504px;top:72px;width:5px;height:1px;background:#808080;"></div>
<div style="left:504px;top:76px;width:5px;height:1px;background:#808080;"></div>
<div style="left:504px;top:80px;width:5px;height:1px;background:#808080;"></div>
<div style="left:504px;top:88px;width:5px;height:1px;background:#808080;"></div>
<div style="left:504px;top:92px;width:5px;height:1px;background:#808080;"></div>
<div style="left:504px;top:96px;width:5px;height:1px;background:#808080;"></div>
<div style="left:504px;top:104px;width:5px;height:1px;background:#808080;"></div>
<div style="left:504px;top:108px;width:5px;height:1px;background:#808080;"></div>
<div style="left:504px;top:112px;width:5px;height:1px;background:#808080;"></div>
<div style="left:504px;top:120px;width:5px;height:1px;background:#808080;"></div>
<div style="left:504px;top:124px;width:5px;height:1px;background:#808080;"></div>
<div style="left:504px;top:128px;width:5px;height:1px;background:#808080;"></div>
<div style="left:504px;top:136px;width:5px;height:1px;background:#808080;"></div>
<div style="left:504px;top:140px;width:5px;height:1px;background:#808080;"></div>
<div style="left:504px;top:144px;width:5px;height:1px;background:#808080;"></div>
<div style="left:504px;top:152px;width:5px;height:1px;background:#808080;"></div>
<div style="left:504px;top:156px;width:5px;height:1px;background:#808080;"></div>
<div style="left:504px;top:160px;width:5px;height:1px;background:#808080;"></div>
<div style="left:504px;top:169px;width:5px;height:1px;background:#808080;"></div>
<div style="left:504px;top:173px;width:5px;height:1px;background:#808080;"></div>
<div style="left:504px;top:177px;width:5px;height:1px;background:#808080;"></div>
<div style="left:504px;top:185px;width:5px;height:1px;background:#808080;"></div>
<div style="left:504px;top:189px;width:5px;height:1px;background:#808080;"></div>
<div style="left:504px;top:193px;width:5px;height:1px;background:#808080;"></div>
<div style="left:504px;top:201px;width:5px;height:1px;background:#808080;"></div>
<div style="left:504px;top:205px;width:5px;height:1px;background:#808080;"></div>
<div style="left:504px;top:209px;width:5px;height:1px;background:#808080;"></div>
<div style="left:504px;top:217px;width:5px;height:1px;background:#808080;"></div>
<div style="left:504px;top:221px;width:5px;height:1px;background:#808080;"></div>
<div style="left:504px;top:225px;width:5px;height:1px;background:#808080;"></div>
<div style="left:504px;top:233px;width:5px;height:1px;background:#808080;"></div>
<div style="left:504px;top:237px;width:5px;height:1px;background:#808080;"></div>
<div style="left:504px;top:241px;width:5px;height:1px;background:#808080;"></div>
<div style="left:504px;top:249px;width:5px;height:1px;background:#808080;"></div>
<div style="left:504px;top:253px;width:5px;height:1px;background:#808080;"></div>
<div style="left:504px;top:257px;width:5px;height:1px;background:#808080;"></div>
<div style="left:504px;top:265px;width:5px;height:1px;background:#808080;"></div>
<div style="left:504px;top:269px;width:5px;height:1px;background:#808080;"></div>
<div style="left:504px;top:274px;width:5px;height:1px;background:#808080;"></div>
<div style="left:504px;top:282px;width:5px;height:1px;background:#808080;"></div>
<div style="left:504px;top:286px;width:5px;height:1px;background:#808080;"></div>
<div style="left:504px;top:290px;width:5px;height:1px;background:#808080;"></div>
<div style="left:504px;top:298px;width:5px;height:1px;background:#808080;"></div>
<div style="left:504px;top:302px;width:5px;height:1px;background:#808080;"></div>
<div style="left:504px;top:306px;width:5px;height:1px;background:#808080;"></div>
<div style="left:504px;top:314px;width:5px;height:1px;background:#808080;"></div>
<div style="left:504px;top:318px;width:5px;height:1px;background:#808080;"></div>
<div style="left:504px;top:322px;width:5px;height:1px;background:#808080;"></div>
<div style="left:504px;top:330px;width:5px;height:1px;background:#808080;"></div>
<svg style="left:506px;top:121px" width="74" height="19"><path d="M0 9.500L12 0h62v19H12z" fill="#a0a0a0"/></svg>
<div class="t" style="left:526px;top:124px;font-size:13.5px;color:#000;letter-spacing:0.172px;font-weight:bold;">4228.25</div>
<div style="left:518px;top:153px;width:61px;height:17px;background:#808080;border:1px solid #f0f0f0"></div>
<div class="t" style="left:529px;top:155.3px;font-size:13.5px;color:#fff;letter-spacing:-0.256px;">4226.25</div>
<div class="t" style="left:430px;top:136.5px;font-size:12.5px;color:#d0dcf0;letter-spacing:0.121px;font-weight:bold;">15:00:26</div>
<div class="t" style="left:448px;top:149.5px;font-size:12.5px;color:#d0dcf0;letter-spacing:0.007px;font-weight:bold;">02:31</div>
<div style="left:504px;top:413.5px;width:14px;height:1.2px;background:#e8e8e8;"></div>
<div style="left:518px;top:406px;width:52px;height:17px;background:#808080;border:1px solid #f0f0f0"></div>
<div class="t" style="left:543px;top:409px;font-size:12.5px;color:#fff;letter-spacing:-0.285px;">189</div>
<div class="t" style="left:4px;top:6px;font-size:13px;color:#b4c6e4;letter-spacing:-0.029px;white-space:pre;">Минута  3</div>
<div style="left:72.3px;top:4.5px;width:15px;height:15px;background:#6d7f9e;border:1px solid #b4c6e4"></div>
<svg style="left:72.29999999999995px;top:4.5px" width="15" height="15"><path d="M7.500 3v9M3 7.500h9" stroke="#e9eef9" stroke-width="1.200"/></svg>
<div style="left:90.22px;top:4.5px;width:15px;height:15px;background:#000;border:1px solid #b4c6e4"></div>
<div class="t" style="left:90.21999999999991px;top:6.8px;width:15px;text-align:center;font-size:11px;color:#b4c6e4">H</div>
<div style="left:108.14px;top:4.5px;width:15px;height:15px;background:#000;border:1px solid #b4c6e4"></div>
<svg style="left:108.13999999999999px;top:4.5px" width="15" height="15"><path d="M3 7.500h9" stroke="#b4c6e4" stroke-width="2"/></svg>
<div style="left:126.06px;top:4.5px;width:15px;height:15px;background:#000;border:1px solid #b4c6e4"></div>
<svg style="left:126.05999999999995px;top:4.5px" width="15" height="15"><path d="M7.500 2.500v10" stroke="#b4c6e4" stroke-width="2"/></svg>
<div style="left:143.98px;top:4.5px;width:15px;height:15px;background:#6d7f9e;border:1px solid #b4c6e4"></div>
<svg style="left:143.98000000000002px;top:4.5px" width="15" height="15"><path d="M3 12.500L12 2.500" stroke="#e9eef9" stroke-width="1.300"/></svg>
<div style="left:161.9px;top:4.5px;width:15px;height:15px;background:#000;border:1px solid #b4c6e4"></div>
<svg style="left:161.89999999999998px;top:4.5px" width="15" height="15"><path d="M3 4h9M3 6.500h7M3 9h8M3 11.500h5" stroke="#b4c6e4" stroke-width="1"/></svg>
<div style="left:179.82px;top:4.5px;width:15px;height:15px;background:#000;border:1px solid #b4c6e4"></div>
<svg style="left:179.81999999999994px;top:4.5px" width="15" height="15"><path d="M3 3.500h9M3 6h9M3 8.500h5M3 11h5" stroke="#b4c6e4" stroke-width="1"/><path d="M9 8.500h3.500M9 10.500h2.500M9.500 8v5" stroke="#b4c6e4" stroke-width="1.200"/></svg>
<div style="left:197.74px;top:4.5px;width:15px;height:15px;background:#6d7f9e;border:1px solid #b4c6e4"></div>
<svg style="left:197.74px;top:4.5px" width="15" height="15"><circle cx="7.500" cy="7.500" r="4.300" fill="#e9eef9"/></svg>
<div style="left:215.66px;top:4.5px;width:15px;height:15px;background:#000;border:1px solid #b4c6e4"></div>
<div class="t" style="left:215.65999999999997px;top:6.8px;width:15px;text-align:center;font-size:11px;color:#b4c6e4">P</div>
<div style="left:233.58px;top:4.5px;width:15px;height:15px;background:#000;border:1px solid #b4c6e4"></div>
<svg style="left:233.57999999999993px;top:4.5px" width="15" height="15"><text x="3" y="11" font-size="10.500" fill="#b4c6e4" font-family="Liberation Sans">P</text><path d="M9 8.500v4M9 10h2.500v2.500" stroke="#b4c6e4" stroke-width="1" fill="none"/></svg>
<div style="left:251.5px;top:4.5px;width:15px;height:15px;background:#000;border:1px solid #b4c6e4"></div>
<div class="t" style="left:251.5px;top:6.8px;width:15px;text-align:center;font-size:11px;color:#b4c6e4">C</div>
<svg style="left:269.4200000000001px;top:4.5px" width="8" height="15"><path d="M6.500 0v15" stroke="#b4c6e4" stroke-width="1.200"/><path d="M4.500 4.500v6L1 7.500z" fill="#b4c6e4"/></svg>
<div style="left:299.3px;top:4.5px;width:15px;height:15px;background:#000;border:1px solid #b4c6e4"></div>
<div class="t" style="left:299.29999999999995px;top:6.8px;width:15px;text-align:center;font-size:11px;color:#b4c6e4">A</div>
<div style="left:317.3px;top:4.5px;width:15px;height:15px;background:#6d7f9e;border:1px solid #b4c6e4"></div>
<svg style="left:317.29999999999995px;top:4.5px" width="15" height="15"><path d="M2.500 7.500h9" stroke="#e9eef9" stroke-width="1.300"/><path d="M8.500 4.500l3.500 3-3.500 3z" fill="#e9eef9"/></svg>
<div style="left:335.3px;top:4.5px;width:15px;height:15px;background:#6d7f9e;border:1px solid #b4c6e4"></div>
<svg style="left:335.29999999999995px;top:4.5px" width="15" height="15"><path d="M7.500 2.500v10" stroke="#e9eef9" stroke-width="2"/><path d="M4 2.500h7l-2.500 2h-2zM4 12.500h7l-2.500-2h-2z" fill="#e9eef9"/></svg>
<div style="left:353.3px;top:4.5px;width:15px;height:15px;background:#000;border:1px solid #b4c6e4"></div>
<div class="t" style="left:353.29999999999995px;top:6.8px;width:15px;text-align:center;font-size:11px;color:#b4c6e4">M</div>
<svg style="left:417px;top:0px" width="12" height="6"><path d="M0 0h12L6 6z" fill="#c4d4f0"/></svg>
<svg style="left:4px;top:318px" width="18" height="18"><path d="M1.500 1L8.500 8" stroke="#dcdcdc" stroke-width="1.100"/><path d="M9.200 9L15.500 15.300" stroke="#f5b800" stroke-width="3.300" stroke-linecap="round"/><path d="M10 9.200l5 5" stroke="#ffe88a" stroke-width="1"/><path d="M2.800 12.700L12.300 3.200" stroke="#ececec" stroke-width="2.200"/><path d="M12.200 .7a2.500 2.500 0 1 0 3.600 3.600" fill="none" stroke="#ececec" stroke-width="1.700"/><path d="M3 12.500l-2.800 .2M3 12.500l-.2 2.900" stroke="#ececec" stroke-width="1.700" stroke-linecap="round"/></svg>
<div class="t" style="left:26px;top:322px;font-size:13px;color:#b4c6e4;letter-spacing:0.008px;white-space:pre;">O: 4225.75  H: 4226.00  L: 4225.00  C: 4226.00</div>
<div class="t" style="left:6px;top:345px;font-size:13px;color:#b4c6e4;letter-spacing:-0.366px;">Volume 313</div>
<div class="t" style="left:230px;top:455px;font-size:12.5px;color:#c0cce0;letter-spacing:-0.855px;">08:36</div>
<div class="t" style="left:320px;top:455px;font-size:12.5px;color:#c0cce0;letter-spacing:-0.855px;">09:18</div>
<div style="left:383px;top:453px;width:41px;height:15px;border:1px solid #b4c6e4"></div>
<div class="t" style="left:453px;top:454px;font-size:13.5px;color:#c0cce0;letter-spacing:-0.255px;">2021.06.09 10:00:00</div>
</div>
<div style="left:0px;top:594px;width:1366px;height:108px;background:#f0f0f0;"></div>
<div style="left:0px;top:594px;width:15px;height:108px;background:#e1e7f1;"></div>
<div style="left:0px;top:594px;width:15px;height:14px;background:#f0f0f0;"></div>
<svg style="left:3px;top:596px" width="9" height="9"><path d="M1 1l6 6M7 1l-6 6" stroke="#000" stroke-width="1.800"/></svg>
<div class="t" style="left:2px;top:700px;font-size:12px;color:#8f9bb0;transform:rotate(-90deg);transform-origin:0 0;letter-spacing:-0.620px">Инструменты</div>
<div style="left:15px;top:594px;width:1351px;height:86px;background:#fff;border-top:1px solid #d0d0d0;border-left:1px solid #d8d8d8"></div>
<div style="left:16px;top:595px;width:1350px;height:23px;background:linear-gradient(#ffffff,#f2f2f2);border-bottom:1px solid #d5d5d5"></div>
<div style="left:177px;top:595px;width:1px;height:23px;background:#d9d9d9;"></div>
<div style="left:177px;top:618px;width:1px;height:20px;background:#e0e0e0;"></div>
<div style="left:177px;top:659px;width:1px;height:20px;background:#e0e0e0;"></div>
<div style="left:289px;top:595px;width:1px;height:23px;background:#d9d9d9;"></div>
<div style="left:289px;top:618px;width:1px;height:20px;background:#e0e0e0;"></div>
<div style="left:289px;top:659px;width:1px;height:20px;background:#e0e0e0;"></div>
<div style="left:430px;top:595px;width:1px;height:23px;background:#d9d9d9;"></div>
<div style="left:430px;top:618px;width:1px;height:20px;background:#e0e0e0;"></div>
<div style="left:430px;top:659px;width:1px;height:20px;background:#e0e0e0;"></div>
<div style="left:1048px;top:595px;width:1px;height:23px;background:#d9d9d9;"></div>
<div style="left:1048px;top:618px;width:1px;height:20px;background:#e0e0e0;"></div>
<div style="left:1048px;top:659px;width:1px;height:20px;background:#e0e0e0;"></div>
<div style="left:1173px;top:595px;width:1px;height:23px;background:#d9d9d9;"></div>
<div style="left:1173px;top:618px;width:1px;height:20px;background:#e0e0e0;"></div>
<div style="left:1173px;top:659px;width:1px;height:20px;background:#e0e0e0;"></div>
<div class="t" style="left:22px;top:601px;font-size:12.5px;color:#000;letter-spacing:-0.679px;">Символ</div>
<svg style="left:77px;top:603px" width="8" height="6"><path d="M0 5.500h8L4 0z" fill="#222"/></svg>
<div class="t" style="left:184px;top:601px;font-size:12.5px;color:#000;letter-spacing:-0.588px;">Тикет</div>
<div class="t" style="left:391px;top:601px;font-size:12.5px;color:#000;letter-spacing:-0.921px;">Время</div>
<div class="t" style="left:529px;top:601px;font-size:12.5px;color:#000;letter-spacing:-1.034px;">Ти</div>
<div class="t" style="left:1023px;top:601px;font-size:12.5px;color:#000;letter-spacing:-0.833px;">T / P</div>
<div class="t" style="left:1141px;top:601px;font-size:12.5px;color:#000;letter-spacing:-0.763px;">Цена</div>
<div class="t" style="left:1306px;top:601px;font-size:12.5px;color:#000;letter-spacing:-0.410px;">Прибыль</div>
<svg style="left:18px;top:620px" width="13" height="16"><path d="M2.500 .8h8a1.700 1.700 0 0 1 1.700 1.700v8l-4 4.700h-5.700a1.700 1.700 0 0 1-1.700-1.700v-11a1.700 1.700 0 0 1 1.700-1.700z" fill="#fff" stroke="#f05a28" stroke-width="1.400"/><path d="M3.500 4.500h6M3.500 7h6M3.500 9.500h4" stroke="#f05a28" stroke-width="1.200"/><path d="M8 15l4-4.500H8z" fill="#f05a28"/></svg>
<div class="t" style="left:37px;top:624px;font-size:12.5px;color:#000;letter-spacing:-1.321px;">mesm21</div>
<div class="t" style="left:180px;top:624px;font-size:12.5px;color:#000;letter-spacing:-0.951px;">16866893</div>
<div class="t" style="left:327px;top:624px;font-size:12.5px;color:#000;letter-spacing:-0.773px;">2021.06.09 10:00:26</div>
<div class="t" style="left:534px;top:624px;font-size:12.5px;color:#000;letter-spacing:-0.250px;">s</div>
<div class="t" style="left:1131px;top:624px;font-size:12.5px;color:#000;letter-spacing:-1.026px;">4228.25</div>
<div class="t" style="left:1316px;top:624px;font-size:12.5px;color:#e00000;letter-spacing:-0.898px;">-1.25</div>
<svg style="left:1347px;top:625px" width="9" height="9"><path d="M1 1l7 7M8 1l-7 7" stroke="#777" stroke-width="1.700"/></svg>
<div style="left:16px;top:639px;width:1350px;height:20px;background:#c8c8c8;"></div>
<svg style="left:18px;top:642px" width="14" height="14"><circle cx="6.500" cy="6.500" r="5.700" fill="none" stroke="#222" stroke-width="1.200"/><path d="M3.500 6.500h6" stroke="#222" stroke-width="1.300"/></svg>
<div class="t" style="left:37px;top:644px;font-size:12.5px;color:#000;letter-spacing:-1.087px;font-weight:bold;">Баланс: 102.25 USD</div>
<div class="t" style="left:145px;top:644px;font-size:12.5px;color:#000;letter-spacing:-1.049px;font-weight:bold;">Средства: 101.00</div>
<div class="t" style="left:239.5px;top:644px;font-size:12.5px;color:#000;letter-spacing:-0.697px;font-weight:bold;">Маржа: 40.00</div>
<div class="t" style="left:317px;top:644px;font-size:12.5px;color:#000;letter-spacing:-0.816px;font-weight:bold;">Свободная маржа: 61.00</div>
<div class="t" style="left:456.5px;top:644px;font-size:12.5px;color:#000;letter-spacing:-0.783px;font-weight:bold;">Уровень маржи:</div>
<div class="t" style="left:1316px;top:644px;font-size:12.5px;color:#000;letter-spacing:-0.898px;font-weight:bold;">-1.25</div>
<svg style="left:1345px;top:641px" width="16" height="16"><circle cx="8" cy="8" r="7.500" fill="#e4e4e4"/><path d="M8 3v10M3 8h10" stroke="#3cb52a" stroke-width="2"/></svg>
<svg style="left:18px;top:660px" width="13" height="16"><path d="M2.500 .8h8a1.700 1.700 0 0 1 1.700 1.700v8l-4 4.700h-5.700a1.700 1.700 0 0 1-1.700-1.700v-11a1.700 1.700 0 0 1 1.700-1.700z" fill="#fff" stroke="#2f86e0" stroke-width="1.400"/><path d="M3.500 4.500h6M3.500 7h6M3.500 9.500h4" stroke="#2f86e0" stroke-width="1.200"/><path d="M8 15l4-4.500H8z" fill="#2f86e0"/></svg>
<div class="t" style="left:37px;top:664px;font-size:12.5px;color:#000;letter-spacing:-1.321px;">mesm21</div>
<div class="t" style="left:180px;top:664px;font-size:12.5px;color:#000;letter-spacing:-0.951px;">16866922</div>
<div class="t" style="left:327px;top:664px;font-size:12.5px;color:#000;letter-spacing:-0.773px;">2021.06.09 10:00:26</div>
<div class="t" style="left:506px;top:664px;font-size:12.5px;color:#000;letter-spacing:-0.227px;">buy lim</div>
<div class="t" style="left:1131px;top:664px;font-size:12.5px;color:#000;letter-spacing:-1.026px;">4228.25</div>
<div class="t" style="left:1306px;top:664px;font-size:12.5px;color:#000;letter-spacing:-0.472px;">placed</div>
<svg style="left:1347px;top:665px" width="9" height="9"><path d="M1 1l7 7M8 1l-7 7" stroke="#777" stroke-width="1.700"/></svg>
<div style="left:1363px;top:594px;width:3px;height:107px;background:#f0f0f0;"></div>
<div style="left:1362px;top:594px;width:1px;height:86px;background:#c4c4c4;"></div>
<div style="left:15px;top:594px;width:1348px;height:1px;background:#a8a8a8;"></div>
<div style="left:15px;top:679px;width:1351px;height:1px;background:#000;"></div>
<div style="left:15px;top:680px;width:1351px;height:21px;background:#f0f0f0;"></div>
<div style="left:18px;top:679px;width:69px;height:19px;background:#fff;border:1px solid #000;border-top:none;box-shadow:1px 1px 0 #000"></div>
<div class="t" style="left:28px;top:684px;font-size:12.5px;color:#000;letter-spacing:-0.526px;">Торговля</div>
<div class="t" style="left:97px;top:684px;font-size:12.5px;color:#808080;letter-spacing:-0.547px;">Активы</div>
<div class="t" style="left:156px;top:684px;font-size:12.5px;color:#808080;letter-spacing:-0.496px;">История</div>
<div class="t" style="left:221px;top:684px;font-size:12.5px;color:#808080;letter-spacing:-0.484px;">Новости</div>
<div class="t" style="left:286px;top:684px;font-size:12.5px;color:#808080;letter-spacing:-0.341px;">Почта</div>
<div class="t" style="left:345px;top:684px;font-size:12.5px;color:#808080;letter-spacing:-0.676px;">Календарь</div>
<div class="t" style="left:421px;top:684px;font-size:12.5px;color:#808080;letter-spacing:-0.275px;">Компания</div>
<div class="t" style="left:497px;top:684px;font-size:12.5px;color:#808080;letter-spacing:-0.661px;">Алерты</div>
<div class="t" style="left:146px;top:683px;font-size:12.5px;color:#808080;">|</div>
<div class="t" style="left:211px;top:683px;font-size:12.5px;color:#808080;">|</div>
<div class="t" style="left:276px;top:683px;font-size:12.5px;color:#808080;">|</div>
<div class="t" style="left:335px;top:683px;font-size:12.5px;color:#808080;">|</div>
<div class="t" style="left:411px;top:683px;font-size:12.5px;color:#808080;">|</div>
<div class="t" style="left:486px;top:683px;font-size:12.5px;color:#808080;">|</div>
<div class="t" style="left:320px;top:689px;font-size:8px;color:#e00000;">7</div>
<svg style="left:1045px;top:684px" width="13" height="15"><path d="M3.500 5V3.500a3 3 0 0 1 6 0V5" fill="none" stroke="#777" stroke-width="1.200"/><rect x=".5" y="4.500" width="12" height="10" fill="#f5c211"/><path d="M3.500 13v-3h1.500l1.500-1.500 1.500 1.500h1.500v3z" fill="#1b62d1"/></svg>
<div class="t" style="left:1062px;top:687px;font-size:12.5px;color:#000;letter-spacing:-0.388px;">Маркет</div>
<svg style="left:1117px;top:684px" width="14" height="16"><path d="M2 8a5.500 5.500 0 0 1 11 0" fill="none" stroke="#3a8ee6" stroke-width="1.300"/><path d="M4.500 8.500a3 3 0 0 1 6 0" fill="none" stroke="#3a8ee6" stroke-width="1.300"/><rect x="2" y="10" width="3" height="5" fill="#12a012"/><rect x="6.500" y="7" width="3" height="8" fill="#12a012"/></svg>
<div class="t" style="left:1134px;top:687px;font-size:12.5px;color:#000;letter-spacing:-0.671px;">Сигналы</div>
<svg style="left:1193px;top:684px" width="17" height="16"><path d="M3.500 8.500a3 3 0 0 1 .8-5.500 4.500 4.500 0 0 1 8.400 0 3 3 0 0 1 .8 5.500z" fill="#fff" stroke="#2f86e0" stroke-width="1.200"/><rect x="4" y="6" width="9" height="3.500" fill="#444"/><rect x="4" y="10.500" width="9" height="3.500" fill="#444"/><rect x="5.500" y="7" width="4" height="1.200" fill="#3dc13d"/><rect x="5.500" y="11.500" width="4" height="1.200" fill="#3dc13d"/></svg>
<div class="t" style="left:1212px;top:687px;font-size:12.5px;color:#000;letter-spacing:-1.671px;">VPS</div>
<svg style="left:1245px;top:684px" width="16" height="15"><rect x=".5" y=".5" width="15" height="13" fill="#2a3a4a" stroke="#2f6fd6"/><rect x=".5" y=".5" width="15" height="2.500" fill="#2f6fd6"/><path d="M2 10l3-3 3 1 5-3" stroke="#6ee04a" stroke-width="1.500" fill="none"/><rect x="1" y="11" width="14" height="2.500" fill="#fff"/></svg>
<div class="t" style="left:1263px;top:687px;font-size:12.5px;color:#000;letter-spacing:-0.610px;">Тестер стратегий</div>
<div style="left:0px;top:701px;width:1366px;height:1px;background:#fff;"></div>
<div style="left:0px;top:702px;width:1366px;height:26px;background:#f0f0f0;border-top:1px solid #d4d4d4"></div>
<div class="t" style="left:2px;top:712px;font-size:12.5px;color:#000;letter-spacing:-0.550px;">Для вызова справки нажмите F1</div>
<div style="left:1045px;top:708px;width:1px;height:18px;background:#a8a8a8;"></div>
<div style="left:1112px;top:708px;width:1px;height:18px;background:#a8a8a8;"></div>
<div style="left:1181px;top:708px;width:1px;height:18px;background:#a8a8a8;"></div>
<div style="left:1247px;top:708px;width:1px;height:18px;background:#a8a8a8;"></div>
<svg style="left:1252px;top:710px" width="18" height="14"><rect x="0" y="10" width="2.500" height="3" fill="#2ca02c"/><rect x="3" y="8" width="2.500" height="5" fill="#2ca02c"/><rect x="6" y="6" width="2.500" height="7" fill="#2ca02c"/><rect x="9" y="4" width="2.500" height="9" fill="#2ca02c"/><rect x="12.500" y="1.500" width="2.500" height="11.500" fill="#fff" stroke="#999" stroke-width=".8"/></svg>
<div class="t" style="left:1273px;top:712px;font-size:12.5px;color:#000;letter-spacing:-0.929px;">195.03 ms</div>
<div style="left:0px;top:728px;width:1366px;height:40px;background:linear-gradient(#1a2c52 0px,#1a2c52 1px,#6a84b0 1px,#4a6694 2px,#35517d 3px,#34507c 21px,#03225c 21px,#02205a 40px);"></div>
<svg style="left:8px;top:729px" width="38" height="38"><defs><radialGradient id="og" cx="50%" cy="35%" r="65%"><stop offset="0" stop-color="#9fd0f8"/><stop offset=".45" stop-color="#2f7fd0"/><stop offset=".8" stop-color="#0d3f92"/><stop offset="1" stop-color="#35c0e8"/></radialGradient></defs>
<circle cx="19" cy="19" r="18.300" fill="url(#og)" stroke="#1a3565" stroke-width="1"/><circle cx="19" cy="19" r="17" fill="none" stroke="rgba(255,255,255,.35)" stroke-width="1"/>
<path d="M11 12c3-1.500 5-1.200 7.500 0l-1.800 6.500c-2.500-1.300-4.500-1.300-7.500 0z" fill="#f0642a"/><path d="M20 12.500c2.500 1.200 5 1.300 7.500 0l-1.800 6.500c-2.500 1.300-5 1.200-7.500 0z" fill="#7cc12e"/>
<path d="M8.800 20c3-1.300 5-1.300 7.500 0l-1.800 6.500c-2.500-1.300-4.500-1.300-7.500 0z" fill="#2aa2ee"/><path d="M17.800 20.500c2.500 1.200 5 1.300 7.500 0l-1.800 6.500c-2.500 1.300-5 1.200-7.500 0z" fill="#f7c51f"/></svg>
<svg style="left:75px;top:737px" width="27" height="24"><rect x="4" y="0" width="22" height="22" rx="1.500" fill="#5f9bd8"/><rect x="2" y="1" width="22" height="22" rx="1.500" fill="#7ab0e4"/><rect x="0" y="2" width="22" height="22" rx="1.500" fill="#8fc0ee" stroke="#4a82c0" stroke-width=".6"/><circle cx="11" cy="13" r="8" fill="#f58a1e" stroke="#fff" stroke-width="1.200"/><path d="M8.500 8.500v9l7-4.500z" fill="#fff"/></svg>
<svg style="left:135px;top:732px" width="31" height="30"><defs><linearGradient id="xg" x1="0" y1="0" x2="1" y2="1"><stop offset="0" stop-color="#5fb85a"/><stop offset=".5" stop-color="#b6e0b0"/><stop offset="1" stop-color="#f2faf0"/></linearGradient></defs><rect x=".8" y=".8" width="27.500" height="28" rx="3" fill="url(#xg)" stroke="#1c7a2a" stroke-width="1.400"/><path d="M4.500 5h6l3 5.500 3.500-5.500h5.500l-6.200 9L23 24h-6l-3.500-6-3.500 6H4l6.500-10z" fill="#1c7a2c"/><path d="M8 5h2.500l7 12.500-1.500 2z" fill="#49a84a" opacity=".55"/><path d="M14 17.500l16-4.500v12.500l-16 3.500z" fill="#fbfefb" stroke="#a8d0a8" stroke-width=".5"/><path d="M16 20l12-3M16 23l12-3M16 26l12-3" stroke="#86c686" stroke-width="1.400"/></svg>
<svg style="left:197px;top:732px" width="31" height="30"><defs><linearGradient id="wg" x1="0" y1="0" x2="1" y2="1"><stop offset="0" stop-color="#4d8ae6"/><stop offset=".45" stop-color="#cfe0f8"/><stop offset="1" stop-color="#ffffff"/></linearGradient></defs><rect x=".8" y=".8" width="27.500" height="28" rx="3" fill="url(#wg)" stroke="#2a5cb8" stroke-width="1.400"/><path d="M4 6h4l2 10.500 3-10.500h3.500l3 10.500 2-10.500h4l-4 16h-4l-2.800-9.500-2.900 9.500h-4z" fill="#1a50b6"/><path d="M15 18l15-4v11.500l-15 4z" fill="#fbfdff" stroke="#a8bce0" stroke-width=".5"/><path d="M17 21.500l11-2.800M17 24.500l11-2.800" stroke="#c4d4ee" stroke-width="1.200"/></svg>
<svg style="left:259px;top:732px" width="32" height="31"><g transform="rotate(-4 16 15)"><path d="M4 2.500h21c1 0 1.500.5 1.600 1.500l2 21c.1 1.500-.8 3-2.500 3H6c-1.700 0-2.800-1.300-2.700-3l-1-21c0-1 .7-1.500 1.700-1.500z" fill="#e4e4e2" stroke="#7a7a78" stroke-width=".9"/><rect x="6" y="5" width="18" height="7" rx="1" fill="#3c3c3c"/><rect x="8" y="6.500" width="14" height="4" fill="#c8d0c0"/><rect x="6.2" y="14.0" width="3.500" height="2.500" rx=".5" fill="#777"/><rect x="6.2" y="17.6" width="3.500" height="2.500" rx=".5" fill="#777"/><rect x="6.2" y="21.2" width="3.500" height="2.500" rx=".5" fill="#c86060"/><rect x="6.2" y="24.8" width="3.500" height="2.500" rx=".5" fill="#c86060"/><rect x="10.9" y="14.0" width="3.500" height="2.500" rx=".5" fill="#777"/><rect x="10.9" y="17.6" width="3.500" height="2.500" rx=".5" fill="#777"/><rect x="10.9" y="21.2" width="3.500" height="2.500" rx=".5" fill="#777"/><rect x="10.9" y="24.8" width="3.500" height="2.500" rx=".5" fill="#777"/><rect x="15.600000000000001" y="14.0" width="3.500" height="2.500" rx=".5" fill="#777"/><rect x="15.600000000000001" y="17.6" width="3.500" height="2.500" rx=".5" fill="#777"/><rect x="15.600000000000001" y="21.2" width="3.500" height="2.500" rx=".5" fill="#777"/><rect x="15.600000000000001" y="24.8" width="3.500" height="2.500" rx=".5" fill="#777"/><rect x="20.3" y="14.0" width="3.500" height="2.500" rx=".5" fill="#777"/><rect x="20.3" y="17.6" width="3.500" height="2.500" rx=".5" fill="#777"/><rect x="20.3" y="21.2" width="3.500" height="2.500" rx=".5" fill="#777"/><rect x="20.3" y="24.8" width="3.500" height="2.500" rx=".5" fill="#777"/></g></svg>
<svg style="left:320px;top:734px" width="34" height="31"><path d="M1.500 8c0-2 1-3 3-3h8l2.500 3h14c2 0 3 1 3 3v14c0 1.500-1 2.500-2.500 2.500h-25.500c-1.500 0-2.500-1-2.500-2.500z" fill="#f2d680" stroke="#c8a040" stroke-width=".8"/><rect x="4" y="3" width="4" height="2.500" fill="#3cb03c"/><rect x="12" y="4.500" width="4" height="2.500" fill="#e03c2a"/><rect x="20" y="6" width="4" height="2.500" fill="#2a8ae0"/><path d="M1.500 12h31v13c0 1.500-1 2.500-2.500 2.500h-26c-1.500 0-2.500-1-2.500-2.500z" fill="#f8e6a0" stroke="#d0a848" stroke-width=".6"/><path d="M7 30v-9c0-1.500 1-2.500 2.500-2.500h13c1.500 0 2.500 1 2.500 2.500v9h-5v-6h-8v6z" fill="#7ab8e8" stroke="#3a78b8" stroke-width=".7"/></svg>
<svg style="left:384px;top:733px" width="30" height="29"><ellipse cx="15" cy="14.500" rx="14.500" ry="14.300" fill="#e0141e"/><ellipse cx="14.500" cy="14.500" rx="6.800" ry="10.800" fill="#1a3a6c"/><path d="M15 .3a14.500 14.300 0 0 1 0 28.400c5-3 7-8 7-14.200S20 3.300 15 .3z" fill="#b00a14" opacity=".55"/><ellipse cx="13" cy="7" rx="10" ry="5" fill="#fff" opacity=".12"/></svg>
<div style="left:432px;top:729px;width:58px;height:38px;background:linear-gradient(rgba(255,255,255,.07),rgba(255,255,255,.03) 50%,rgba(255,255,255,0) 51%,rgba(255,255,255,.04));border:1px solid rgba(130,155,200,.7);border-radius:2px;box-shadow:inset 0 0 0 1px rgba(10,25,60,.35)"></div>
<svg style="left:445px;top:732px" width="32" height="32"><rect x=".8" y=".8" width="30.400" height="30.400" rx="5" fill="#f6f4f0" stroke="#8cc4fa" stroke-width="1.600"/><path d="M5 13a15 15 0 0 1 22 0" fill="none" stroke="#56a8f4" stroke-width="2.400" stroke-linecap="round"/><path d="M8.500 17.500a10.500 10.500 0 0 1 15 0" fill="none" stroke="#62aef4" stroke-width="2.300" stroke-linecap="round"/><path d="M12 21.500a5.500 5.500 0 0 1 8 0" fill="none" stroke="#72b8f6" stroke-width="2.200" stroke-linecap="round"/><circle cx="16" cy="25" r="2.200" fill="#52b4f0"/><circle cx="16" cy="25" r=".8" fill="#bfe4fb"/></svg>
<div style="left:494px;top:729px;width:60px;height:38px;background:linear-gradient(165deg,#e6eaf2 0%,#cfd6e4 30%,#a3b0cc 48%,#7d90b8 60%,#6e83b0 100%);border:1px solid #d4dcec;border-radius:2px;box-shadow:inset 0 0 0 1px rgba(255,255,255,.25)"></div>
<svg style="left:509px;top:732px" width="30" height="31"><ellipse cx="8" cy="21" rx="7.500" ry="6.500" fill="#e6c42e" stroke="#a88a10" stroke-width=".6"/><circle cx="5" cy="24" r="2.800" fill="#f4dc60"/><ellipse cx="22" cy="21" rx="7.500" ry="6.500" fill="#2f86d6" stroke="#1a5aa0" stroke-width=".6"/><circle cx="25" cy="24" r="2.800" fill="#7cc0f0"/><ellipse cx="15" cy="10" rx="8" ry="7" fill="#3a9a3a" stroke="#1f6a1f" stroke-width=".6"/><circle cx="15" cy="4.500" r="3" fill="#5cc05c"/><circle cx="15" cy="16" r="5.600" fill="#fff" stroke="#dcdcdc" stroke-width=".8"/><text x="15" y="20" font-size="10.500" font-weight="bold" text-anchor="middle" fill="#f08a1e" font-family="Liberation Sans">5</text></svg>
<div class="t" style="left:1053px;top:740px;font-size:12.5px;color:#fff;letter-spacing:-1.183px;">EN</div>
<svg style="left:1085px;top:742px" width="16" height="18"><path d="M8 0l7 3v6c0 5-3.500 7.500-7 9-3.500-1.500-7-4-7-9V3z" fill="#1aa878" stroke="#0d6a4a" stroke-width=".8"/><path d="M4.500 8.500l2.500 2.500 4.500-4.500" stroke="#fff" stroke-width="1.600" fill="none"/></svg>
<svg style="left:1108px;top:742px" width="17" height="17"><rect x="0" y="0" width="17" height="17" rx="3" fill="#eaf3ff"/><path d="M3 7.500a8 8 0 0 1 11 0M5 10a5.500 5.500 0 0 1 7 0M7 12.300a2.500 2.500 0 0 1 3 0" fill="none" stroke="#4a9ef0" stroke-width="1.400"/><circle cx="8.500" cy="14" r="1" fill="#4a9ef0"/></svg>
<svg style="left:1131px;top:741px" width="18" height="20"><rect x="3" y="0" width="6" height="5" fill="#aaa"/><rect x="2" y="5" width="8" height="9" rx="1" fill="#888"/><path d="M6 14v5" stroke="#777" stroke-width="2"/><circle cx="12.500" cy="14.500" r="4.500" fill="#2ca82c"/><path d="M10.300 14.500l1.600 1.800 3-3.300" stroke="#fff" stroke-width="1.300" fill="none"/></svg>
<svg style="left:1156px;top:742px" width="17" height="17"><circle cx="8.500" cy="8.500" r="8.300" fill="#2cb02c"/><ellipse cx="8.500" cy="5" rx="6" ry="3.500" fill="#fff" opacity=".25"/><rect x="4" y="9" width="2" height="4" fill="#fff"/><rect x="7.500" y="6.500" width="2" height="6.500" fill="#fff"/><rect x="11" y="4" width="2" height="9" fill="#fff"/></svg>
<svg style="left:1180px;top:741px" width="18" height="19"><path d="M2 1v17" stroke="#eee" stroke-width="1.500"/><path d="M3 2c3-1.500 5 1.500 9 0v7c-4 1.500-6-1.500-9 0z" fill="#f4f4f4"/><circle cx="11.500" cy="13" r="4.800" fill="#e02a2a"/><path d="M9.300 10.800l4.400 4.400M13.700 10.800l-4.400 4.400" stroke="#fff" stroke-width="1.500"/></svg>
<svg style="left:1204px;top:744px" width="18" height="14"><rect x="0" y="10" width="2.500" height="3" fill="#fff"/><rect x="3.500" y="8" width="2.500" height="5" fill="#fff"/><rect x="7" y="5.500" width="2.500" height="7.500" fill="#fff"/><rect x="10.500" y="3" width="2.500" height="10" fill="#8a98b8"/><rect x="14" y=".5" width="2.500" height="12.500" fill="#8a98b8"/></svg>
<svg style="left:1229px;top:743px" width="15" height="15"><path d="M1 5h3l4-4v13l-4-4H1z" fill="#fff"/><path d="M10.500 4.500a4.500 4.500 0 0 1 0 6" fill="none" stroke="#fff" stroke-width="1.200"/></svg>
<svg style="left:1252px;top:742px" width="18" height="17"><rect x="1" y="2" width="9" height="14" rx="1.500" fill="none" stroke="#fff" stroke-width="1.600"/><rect x="3.500" y="0" width="4" height="2.500" fill="#fff"/><path d="M8 6h5v-2.500M8 11h5v2.500M13 5.500h3M13 11.500h3" stroke="#fff" stroke-width="1.500" fill="none"/><rect x="8" y="5" width="5" height="7" fill="#fff"/></svg>
<div class="t" style="left:1298px;top:734px;font-size:12.5px;color:#fff;letter-spacing:-0.455px;">15:00</div>
<div class="t" style="left:1282px;top:751px;font-size:12.5px;color:#fff;letter-spacing:-0.255px;">09.06.2021</div>
<div style="left:1352px;top:729px;width:14px;height:39px;background:linear-gradient(rgba(255,255,255,.22),rgba(255,255,255,.08) 50%,rgba(255,255,255,.02) 51%,rgba(255,255,255,.10));border-left:1px solid rgba(170,190,225,.8);box-shadow:inset 1px 0 0 rgba(20,30,60,.5)"></div>
<div style="left:540px;top:480px;width:464px;height:300px;border-radius:6px 6px 0 0;box-shadow:0 0 0 1px rgba(40,52,80,.85),0 0 4px 2px rgba(190,200,220,.33)">
<div style="left:0;top:0;width:464px;height:300px;border-radius:6px 6px 0 0;-webkit-backdrop-filter:blur(5px);backdrop-filter:blur(5px);background:linear-gradient(rgba(30,50,100,.50) 0px,rgba(40,70,135,.42) 8px,rgba(60,95,160,.40) 18px,rgba(170,190,225,.55) 27px,rgba(48,84,156,.42) 29px,rgba(48,84,156,.42) 100%)"></div>
<div style="left:-6px;top:-1px;width:160px;height:30px;background:radial-gradient(ellipse 50% 50% at 45% 50%,rgba(235,240,248,.93) 0,rgba(225,232,244,.8) 45%,rgba(150,170,200,.0) 100%)"></div>
<div style="left:110px;top:4px;width:150px;height:24px;background:radial-gradient(ellipse 50% 50% at 50% 60%,rgba(130,150,180,.40),rgba(130,150,180,0))"></div>
<div style="left:150px;top:0;width:90px;height:28px;overflow:hidden"><div style="left:30px;top:-10px;width:14px;height:50px;background:rgba(255,255,255,.10);transform:rotate(35deg)"></div><div style="left:55px;top:-10px;width:7px;height:50px;background:rgba(255,255,255,.08);transform:rotate(35deg)"></div></div>
<div style="left:1px;top:0px;width:462px;height:1px;background:rgba(190,205,230,.75);"></div>
<div style="left:0px;top:6px;width:1px;height:282px;background:rgba(225,234,248,.55);"></div>
<div style="left:463px;top:6px;width:1px;height:282px;background:rgba(30,45,80,.6);"></div>
<div style="left:1px;top:28px;width:1px;height:260px;background:rgba(235,242,252,.55);"></div>
<div style="left:5px;top:28px;width:1px;height:260px;background:rgba(235,242,252,.6);"></div>
<div style="left:458px;top:28px;width:1px;height:260px;background:rgba(235,242,252,.6);"></div>
<div style="left:462px;top:28px;width:1px;height:260px;background:rgba(235,242,252,.45);"></div>
<div class="t" style="left:8px;top:7px;font-size:12.5px;color:#000;letter-spacing:-0.508px;white-space:pre;">MESM21, Тик  1000</div>
<div style="left:411px;top:-0.5px;width:48px;height:17px;background:linear-gradient(rgba(150,170,200,.40),rgba(20,30,60,.2) 50%,rgba(10,20,40,.45) 51%,rgba(60,80,120,.3));border:1px solid #dfe8f5;border-top:none;border-radius:0 0 5px 5px;box-shadow:0 0 0 1px rgba(10,20,40,.7)"></div>
<div class="t" style="left:430px;top:-2px;font-size:15px;color:#fff;font-weight:bold;transform:scaleX(1.4);transform-origin:0 0;text-shadow:0 0 2px #000">x</div>
<div style="left:6px;top:28px;width:452px;height:262px;background:#f0f0f0;border:1px solid #55627c"></div>
<div style="left:12px;top:34px;width:84px;height:35px;background:#ff7f50;border:1px solid #8a4a30"></div>
<div class="t" style="left:18.0px;top:38px;font-size:12px;color:#000;letter-spacing:-0.268px;">Best Sell Limit</div>
<div class="t" style="left:35.0px;top:51px;font-size:12px;color:#000;letter-spacing:-0.768px;">4228.25</div>
<div style="left:107px;top:34px;width:50px;height:20px;background:#ff7f50;border:1px solid #8a4a30"></div>
<div class="t" style="left:119.0px;top:37.5px;font-size:13px;color:#000;letter-spacing:-1.450px;">SELL</div>
<div style="left:169px;top:34px;width:65px;height:20px;background:#ff7f50;border:1px solid #8a4a30"></div>
<div class="t" style="left:184.0px;top:37.5px;font-size:13px;color:#000;letter-spacing:-0.429px;">Delete</div>
<div style="left:107px;top:64px;width:50px;height:24px;background:#ff0000;border:1px solid #8a1010"></div>
<div class="t" style="left:114.5px;top:69.5px;font-size:12.5px;color:#000;letter-spacing:-1.612px;font-weight:bold;">CLOSE</div>
<div style="left:169px;top:64px;width:65px;height:24px;background:#d3d3d3;border:1px solid #6a6a6a"></div>
<div class="t" style="left:175.5px;top:69.5px;font-size:13px;color:#000;letter-spacing:-0.219px;">Delete all</div>
<div style="left:12px;top:84.5px;width:84px;height:34.5px;background:#1e90ff;border:1px solid #124f9a"></div>
<div class="t" style="left:17.5px;top:88.5px;font-size:12px;color:#000;letter-spacing:-0.264px;">Best Buy Limit</div>
<div class="t" style="left:35.0px;top:101.5px;font-size:12px;color:#000;letter-spacing:-0.768px;">4228.00</div>
<div style="left:107px;top:98px;width:50px;height:20px;background:#1e90ff;border:1px solid #124f9a"></div>
<div class="t" style="left:121.5px;top:101.5px;font-size:13px;color:#000;letter-spacing:-1.910px;">BUY</div>
<div style="left:169px;top:98px;width:65px;height:20px;background:#1e90ff;border:1px solid #124f9a"></div>
<div class="t" style="left:184.0px;top:101.5px;font-size:13px;color:#000;letter-spacing:-0.429px;">Delete</div>
<div style="left:169px;top:128.5px;width:65px;height:20.5px;background:#d3d3d3;border:1px solid #6a6a6a"></div>
<div class="t" style="left:181.0px;top:132.25px;font-size:13px;color:#000;letter-spacing:-1.058px;">Reverse</div>
<div class="t" style="left:13px;top:131.0px;font-size:12.5px;color:#000;letter-spacing:-0.607px;">объем ордера</div>
<div style="left:100.5px;top:128.5px;width:56.5px;height:20.5px;background:#fff;border:1px solid #abadb3;border-top-color:#8e8f94"></div>
<div class="t" style="left:103.5px;top:132.25px;font-size:12.5px;color:#000;letter-spacing:0.049px;">1</div>
<div style="left:140px;top:130.5px;width:15px;height:8.25px;background:linear-gradient(#f6f6f6,#e2e2e2);border:1px solid #c2c2c2;border-radius:2px"></div>
<svg style="left:144.5px;top:132.9px" width="6" height="4"><path d="M0 3.500L3 0L6 3.500z" fill="#4a60a6"/></svg>
<div style="left:140px;top:138.75px;width:15px;height:8.25px;background:linear-gradient(#f6f6f6,#e2e2e2);border:1px solid #c2c2c2;border-radius:2px"></div>
<svg style="left:144.5px;top:141.2px" width="6" height="4"><path d="M0 0L3 3.500L6 0z" fill="#4a60a6"/></svg>
<div style="left:12px;top:160px;width:13px;height:13px;background:linear-gradient(135deg,#d8d8d8,#f6f6f6);border:1px solid #8e8f8f;box-shadow:inset 0 0 0 1px #f4f4f4"></div>
<svg style="left:14px;top:162px" width="10" height="10"><path d="M1 4.500l2.500 3.500L8.500 .5" fill="none" stroke="#31378c" stroke-width="1.800"/></svg>
<div class="t" style="left:29px;top:159.0px;font-size:12.5px;color:#000;letter-spacing:-2.145px;">SL</div>
<div style="left:54px;top:158.5px;width:64.5px;height:20.5px;background:#fff;border:1px solid #abadb3;border-top-color:#8e8f94"></div>
<div class="t" style="left:57px;top:162.25px;font-size:12.5px;color:#000;letter-spacing:0.049px;">7</div>
<div style="left:101.5px;top:160.5px;width:15px;height:8.25px;background:linear-gradient(#f6f6f6,#e2e2e2);border:1px solid #c2c2c2;border-radius:2px"></div>
<svg style="left:106.0px;top:162.9px" width="6" height="4"><path d="M0 3.500L3 0L6 3.500z" fill="#4a60a6"/></svg>
<div style="left:101.5px;top:168.75px;width:15px;height:8.25px;background:linear-gradient(#f6f6f6,#e2e2e2);border:1px solid #c2c2c2;border-radius:2px"></div>
<svg style="left:106.0px;top:171.2px" width="6" height="4"><path d="M0 0L3 3.500L6 0z" fill="#4a60a6"/></svg>
<div style="left:125px;top:160px;width:13px;height:13px;background:linear-gradient(135deg,#d8d8d8,#f6f6f6);border:1px solid #8e8f8f;box-shadow:inset 0 0 0 1px #f4f4f4"></div>
<svg style="left:127px;top:162px" width="10" height="10"><path d="M1 4.500l2.500 3.500L8.500 .5" fill="none" stroke="#31378c" stroke-width="1.800"/></svg>
<div class="t" style="left:142px;top:159.0px;font-size:12.5px;color:#000;letter-spacing:-1.986px;">TP</div>
<div style="left:169px;top:158.5px;width:65px;height:20.5px;background:#fff;border:1px solid #abadb3;border-top-color:#8e8f94"></div>
<div class="t" style="left:172px;top:162.25px;font-size:12.5px;color:#000;letter-spacing:0.049px;">5</div>
<div style="left:217px;top:160.5px;width:15px;height:8.25px;background:linear-gradient(#f6f6f6,#e2e2e2);border:1px solid #c2c2c2;border-radius:2px"></div>
<svg style="left:221.5px;top:162.9px" width="6" height="4"><path d="M0 3.500L3 0L6 3.500z" fill="#4a60a6"/></svg>
<div style="left:217px;top:168.75px;width:15px;height:8.25px;background:linear-gradient(#f6f6f6,#e2e2e2);border:1px solid #c2c2c2;border-radius:2px"></div>
<svg style="left:221.5px;top:171.2px" width="6" height="4"><path d="M0 0L3 3.500L6 0z" fill="#4a60a6"/></svg>
<div style="left:13px;top:190.5px;width:221px;height:119.5px;border:1px solid #d5dfe5;border-radius:3px;box-shadow:inset 1px 1px 0 #fff"></div>
<div style="left:19px;top:183.5px;width:84px;height:14px;background:#f0f0f0;"></div>
<div class="t" style="left:21px;top:184.20000000000005px;font-size:12.5px;color:#000;letter-spacing:-0.389px;">Дельта/Объем</div>
<svg style="left:19px;top:204.5px" width="13" height="13"><circle cx="6.500" cy="6.500" r="5.800" fill="#f4f4f4" stroke="#8e8f8f"/><circle cx="6.500" cy="6.500" r="4" fill="#e0e0e0" opacity=".6"/></svg>
<div class="t" style="left:36px;top:205.0px;font-size:12.5px;color:#000;letter-spacing:-0.292px;">покупка</div>
<div style="left:92px;top:204.5px;width:13px;height:13px;background:linear-gradient(135deg,#d8d8d8,#f6f6f6);border:1px solid #8e8f8f;box-shadow:inset 0 0 0 1px #f4f4f4"></div>
<div class="t" style="left:109px;top:204.5px;font-size:14.5px;color:#006400;letter-spacing:-0.268px;font-weight:bold;">ВКЛЮЧИТЬ</div>
<svg style="left:19px;top:227.5px" width="13" height="13"><circle cx="6.500" cy="6.500" r="5.800" fill="#f4f4f4" stroke="#8e8f8f"/><circle cx="6.500" cy="6.500" r="4" fill="#e0e0e0" opacity=".6"/><circle cx="6.500" cy="6.500" r="3.200" fill="#1f6fc0"/><circle cx="5.500" cy="5.500" r="1.200" fill="#8fd0f8"/></svg>
<div class="t" style="left:36px;top:228.0px;font-size:12.5px;color:#000;letter-spacing:-0.850px;">продажа</div>
<div style="left:92px;top:225px;width:57px;height:20px;background:#fff;border:1px solid #abadb3;border-top-color:#8e8f94"></div>
<div class="t" style="left:95px;top:228.5px;font-size:12.5px;color:#000;letter-spacing:0.049px;">10</div>
<div style="left:132px;top:227.0px;width:15px;height:8.0px;background:linear-gradient(#f6f6f6,#e2e2e2);border:1px solid #c2c2c2;border-radius:2px"></div>
<svg style="left:136.5px;top:229.3px" width="6" height="4"><path d="M0 3.500L3 0L6 3.500z" fill="#4a60a6"/></svg>
<div style="left:132px;top:235.0px;width:15px;height:8.0px;background:linear-gradient(#f6f6f6,#e2e2e2);border:1px solid #c2c2c2;border-radius:2px"></div>
<svg style="left:136.5px;top:237.3px" width="6" height="4"><path d="M0 0L3 3.500L6 0z" fill="#4a60a6"/></svg>
<div class="t" style="left:151px;top:228.0px;font-size:12.5px;color:#000;letter-spacing:-0.694px;">таймер, сек</div>
<div style="left:19px;top:252.5px;width:13px;height:13px;background:linear-gradient(135deg,#d8d8d8,#f6f6f6);border:1px solid #8e8f8f;box-shadow:inset 0 0 0 1px #f4f4f4"></div>
<svg style="left:21px;top:254.5px" width="10" height="10"><path d="M1 4.500l2.500 3.500L8.500 .5" fill="none" stroke="#31378c" stroke-width="1.800"/></svg>
<div class="t" style="left:36px;top:252.5px;font-size:12.5px;color:#000;letter-spacing:-0.691px;">использовать линию</div>
<div style="left:160px;top:252.5px;width:13px;height:13px;background:linear-gradient(135deg,#d8d8d8,#f6f6f6);border:1px solid #8e8f8f;box-shadow:inset 0 0 0 1px #f4f4f4"></div>
<svg style="left:162px;top:254.5px" width="10" height="10"><path d="M1 4.500l2.500 3.500L8.500 .5" fill="none" stroke="#31378c" stroke-width="1.800"/></svg>
<div class="t" style="left:177px;top:252.5px;font-size:12.5px;color:#000;letter-spacing:-0.515px;">лимит</div>
<div style="left:19px;top:271.5px;width:41.5px;height:20.5px;background:#fff;border:1px solid #abadb3;border-top-color:#8e8f94"></div>
<div class="t" style="left:22px;top:275.25px;font-size:12.5px;color:#000;letter-spacing:0.049px;">1</div>
<div style="left:43.5px;top:273.5px;width:15px;height:8.25px;background:linear-gradient(#f6f6f6,#e2e2e2);border:1px solid #c2c2c2;border-radius:2px"></div>
<svg style="left:48.0px;top:275.9px" width="6" height="4"><path d="M0 3.500L3 0L6 3.500z" fill="#4a60a6"/></svg>
<div style="left:43.5px;top:281.75px;width:15px;height:8.25px;background:linear-gradient(#f6f6f6,#e2e2e2);border:1px solid #c2c2c2;border-radius:2px"></div>
<svg style="left:48.0px;top:284.2px" width="6" height="4"><path d="M0 0L3 3.500L6 0z" fill="#4a60a6"/></svg>
<div class="t" style="left:67px;top:274.0px;font-size:12.5px;color:#000;letter-spacing:-0.597px;">допуск по сигналу в тиках</div>
<div style="left:240.5px;top:41.5px;width:211.0px;height:114.0px;border:1px solid #d5dfe5;border-radius:3px;box-shadow:inset 1px 1px 0 #fff"></div>
<div style="left:246.5px;top:34.5px;width:91px;height:14px;background:#f0f0f0;"></div>
<div class="t" style="left:248.5px;top:35.200000000000045px;font-size:12.5px;color:#000;letter-spacing:-0.831px;">Лимитный ордер</div>
<div style="left:246px;top:51px;width:13px;height:13px;background:linear-gradient(135deg,#d8d8d8,#f6f6f6);border:1px solid #8e8f8f;box-shadow:inset 0 0 0 1px #f4f4f4"></div>
<div class="t" style="left:263px;top:51.5px;font-size:12.5px;color:#000;letter-spacing:-0.752px;">отменяется, если цена ушла на</div>
<div style="left:246px;top:68px;width:57px;height:19.5px;background:#fff;border:1px solid #abadb3;border-top-color:#8e8f94"></div>
<div class="t" style="left:249px;top:71.25px;font-size:12.5px;color:#000;letter-spacing:0.049px;">5</div>
<div style="left:286px;top:70.0px;width:15px;height:7.75px;background:linear-gradient(#f6f6f6,#e2e2e2);border:1px solid #c2c2c2;border-radius:2px"></div>
<svg style="left:290.5px;top:72.2px" width="6" height="4"><path d="M0 3.500L3 0L6 3.500z" fill="#4a60a6"/></svg>
<div style="left:286px;top:77.75px;width:15px;height:7.75px;background:linear-gradient(#f6f6f6,#e2e2e2);border:1px solid #c2c2c2;border-radius:2px"></div>
<svg style="left:290.5px;top:79.9px" width="6" height="4"><path d="M0 0L3 3.500L6 0z" fill="#4a60a6"/></svg>
<div class="t" style="left:311px;top:71.5px;font-size:12.5px;color:#000;letter-spacing:-0.582px;">тиков</div>
<div style="left:246px;top:95px;width:13px;height:13px;background:linear-gradient(135deg,#d8d8d8,#f6f6f6);border:1px solid #8e8f8f;box-shadow:inset 0 0 0 1px #f4f4f4"></div>
<div class="t" style="left:263px;top:95.5px;font-size:12.5px;color:#000;letter-spacing:-0.748px;">передвигается на</div>
<div style="left:363px;top:90.5px;width:42px;height:19.5px;background:#fff;border:1px solid #abadb3;border-top-color:#8e8f94"></div>
<div class="t" style="left:366px;top:93.75px;font-size:12.5px;color:#000;letter-spacing:0.049px;">0</div>
<div style="left:388px;top:92.5px;width:15px;height:7.75px;background:linear-gradient(#f6f6f6,#e2e2e2);border:1px solid #c2c2c2;border-radius:2px"></div>
<svg style="left:392.5px;top:94.7px" width="6" height="4"><path d="M0 3.500L3 0L6 3.500z" fill="#4a60a6"/></svg>
<div style="left:388px;top:100.25px;width:15px;height:7.75px;background:linear-gradient(#f6f6f6,#e2e2e2);border:1px solid #c2c2c2;border-radius:2px"></div>
<svg style="left:392.5px;top:102.4px" width="6" height="4"><path d="M0 0L3 3.500L6 0z" fill="#4a60a6"/></svg>
<div class="t" style="left:412px;top:94.5px;font-size:12.5px;color:#000;letter-spacing:-0.582px;">тиков</div>
<div class="t" style="left:247px;top:116.5px;font-size:12.5px;color:#000;letter-spacing:-0.949px;">если цена прошла</div>
<div style="left:349px;top:112.5px;width:47px;height:19.5px;background:#fff;border:1px solid #abadb3;border-top-color:#8e8f94"></div>
<div class="t" style="left:352px;top:115.75px;font-size:12.5px;color:#000;letter-spacing:0.049px;">0</div>
<div style="left:379px;top:114.5px;width:15px;height:7.75px;background:linear-gradient(#f6f6f6,#e2e2e2);border:1px solid #c2c2c2;border-radius:2px"></div>
<svg style="left:383.5px;top:116.7px" width="6" height="4"><path d="M0 3.500L3 0L6 3.500z" fill="#4a60a6"/></svg>
<div style="left:379px;top:122.25px;width:15px;height:7.75px;background:linear-gradient(#f6f6f6,#e2e2e2);border:1px solid #c2c2c2;border-radius:2px"></div>
<svg style="left:383.5px;top:124.4px" width="6" height="4"><path d="M0 0L3 3.500L6 0z" fill="#4a60a6"/></svg>
<div class="t" style="left:402px;top:116.5px;font-size:12.5px;color:#000;letter-spacing:-0.480px;">тиков и</div>
<div class="t" style="left:247px;top:137.5px;font-size:12.5px;color:#000;letter-spacing:-0.861px;">прошло не более</div>
<div style="left:349px;top:134.5px;width:58px;height:19.5px;background:#fff;border:1px solid #abadb3;border-top-color:#8e8f94"></div>
<div class="t" style="left:352px;top:137.75px;font-size:12.5px;color:#000;letter-spacing:0.049px;">0</div>
<div style="left:390px;top:136.5px;width:15px;height:7.75px;background:linear-gradient(#f6f6f6,#e2e2e2);border:1px solid #c2c2c2;border-radius:2px"></div>
<svg style="left:394.5px;top:138.7px" width="6" height="4"><path d="M0 3.500L3 0L6 3.500z" fill="#4a60a6"/></svg>
<div style="left:390px;top:144.25px;width:15px;height:7.75px;background:linear-gradient(#f6f6f6,#e2e2e2);border:1px solid #c2c2c2;border-radius:2px"></div>
<svg style="left:394.5px;top:146.4px" width="6" height="4"><path d="M0 0L3 3.500L6 0z" fill="#4a60a6"/></svg>
<div class="t" style="left:415px;top:137.5px;font-size:12.5px;color:#000;letter-spacing:-0.536px;">сек.</div>
<div style="left:249px;top:163.5px;width:13px;height:13px;background:linear-gradient(135deg,#d8d8d8,#f6f6f6);border:1px solid #8e8f8f;box-shadow:inset 0 0 0 1px #f4f4f4"></div>
<svg style="left:251px;top:165.5px" width="10" height="10"><path d="M1 4.500l2.500 3.500L8.500 .5" fill="none" stroke="#31378c" stroke-width="1.800"/></svg>
<div class="t" style="left:266px;top:163.5px;font-size:12.5px;color:#000;letter-spacing:-0.852px;">тейкпрофит лимитным ордером</div>
<div style="left:240.5px;top:190px;width:211.0px;height:120px;border:1px solid #d5dfe5;border-radius:3px;box-shadow:inset 1px 1px 0 #fff"></div>
<div style="left:246.5px;top:183px;width:57px;height:14px;background:#f0f0f0;"></div>
<div class="t" style="left:248.5px;top:183.70000000000005px;font-size:12.5px;color:#000;letter-spacing:-0.832px;">Имбаланс</div>
<svg style="left:248px;top:202.0px" width="13" height="13"><circle cx="6.500" cy="6.500" r="5.800" fill="#f4f4f4" stroke="#8e8f8f"/><circle cx="6.500" cy="6.500" r="4" fill="#e0e0e0" opacity=".6"/></svg>
<div class="t" style="left:265px;top:202.5px;font-size:12.5px;color:#000;letter-spacing:-0.292px;">покупка</div>
<div style="left:322px;top:203px;width:13px;height:13px;background:linear-gradient(135deg,#d8d8d8,#f6f6f6);border:1px solid #8e8f8f;box-shadow:inset 0 0 0 1px #f4f4f4"></div>
<div class="t" style="left:339px;top:203.0px;font-size:14.5px;color:#006400;letter-spacing:-0.268px;font-weight:bold;">ВКЛЮЧИТЬ</div>
<svg style="left:248px;top:227.0px" width="13" height="13"><circle cx="6.500" cy="6.500" r="5.800" fill="#f4f4f4" stroke="#8e8f8f"/><circle cx="6.500" cy="6.500" r="4" fill="#e0e0e0" opacity=".6"/><circle cx="6.500" cy="6.500" r="3.200" fill="#1f6fc0"/><circle cx="5.500" cy="5.500" r="1.200" fill="#8fd0f8"/></svg>
<div class="t" style="left:265px;top:227.5px;font-size:12.5px;color:#000;letter-spacing:-0.850px;">продажа</div>
<div style="left:321px;top:224px;width:57px;height:20px;background:#fff;border:1px solid #abadb3;border-top-color:#8e8f94"></div>
<div class="t" style="left:324px;top:227.5px;font-size:12.5px;color:#000;letter-spacing:0.049px;">10</div>
<div style="left:361px;top:226.0px;width:15px;height:8.0px;background:linear-gradient(#f6f6f6,#e2e2e2);border:1px solid #c2c2c2;border-radius:2px"></div>
<svg style="left:365.5px;top:228.3px" width="6" height="4"><path d="M0 3.500L3 0L6 3.500z" fill="#4a60a6"/></svg>
<div style="left:361px;top:234.0px;width:15px;height:8.0px;background:linear-gradient(#f6f6f6,#e2e2e2);border:1px solid #c2c2c2;border-radius:2px"></div>
<svg style="left:365.5px;top:236.3px" width="6" height="4"><path d="M0 0L3 3.500L6 0z" fill="#4a60a6"/></svg>
<div class="t" style="left:381px;top:228.0px;font-size:12.5px;color:#000;letter-spacing:-0.694px;">таймер, сек</div>
<div style="left:248px;top:252.5px;width:13px;height:13px;background:linear-gradient(135deg,#d8d8d8,#f6f6f6);border:1px solid #8e8f8f;box-shadow:inset 0 0 0 1px #f4f4f4"></div>
<svg style="left:250px;top:254.5px" width="10" height="10"><path d="M1 4.500l2.500 3.500L8.500 .5" fill="none" stroke="#31378c" stroke-width="1.800"/></svg>
<div class="t" style="left:265px;top:252.5px;font-size:12.5px;color:#000;letter-spacing:-0.691px;">использовать линию</div>
<div style="left:391px;top:252.5px;width:13px;height:13px;background:linear-gradient(135deg,#d8d8d8,#f6f6f6);border:1px solid #8e8f8f;box-shadow:inset 0 0 0 1px #f4f4f4"></div>
<svg style="left:393px;top:254.5px" width="10" height="10"><path d="M1 4.500l2.500 3.500L8.500 .5" fill="none" stroke="#31378c" stroke-width="1.800"/></svg>
<div class="t" style="left:408px;top:252.5px;font-size:12.5px;color:#000;letter-spacing:-0.515px;">лимит</div>
<div style="left:248.5px;top:271.5px;width:42.5px;height:20.5px;background:#fff;border:1px solid #abadb3;border-top-color:#8e8f94"></div>
<div class="t" style="left:251.5px;top:275.25px;font-size:12.5px;color:#000;letter-spacing:0.049px;">1</div>
<div style="left:274px;top:273.5px;width:15px;height:8.25px;background:linear-gradient(#f6f6f6,#e2e2e2);border:1px solid #c2c2c2;border-radius:2px"></div>
<svg style="left:278.5px;top:275.9px" width="6" height="4"><path d="M0 3.500L3 0L6 3.500z" fill="#4a60a6"/></svg>
<div style="left:274px;top:281.75px;width:15px;height:8.25px;background:linear-gradient(#f6f6f6,#e2e2e2);border:1px solid #c2c2c2;border-radius:2px"></div>
<svg style="left:278.5px;top:284.2px" width="6" height="4"><path d="M0 0L3 3.500L6 0z" fill="#4a60a6"/></svg>
<div class="t" style="left:298px;top:274.0px;font-size:12.5px;color:#000;letter-spacing:-0.597px;">допуск по сигналу в тиках</div>
</div>
</div></body></html>
